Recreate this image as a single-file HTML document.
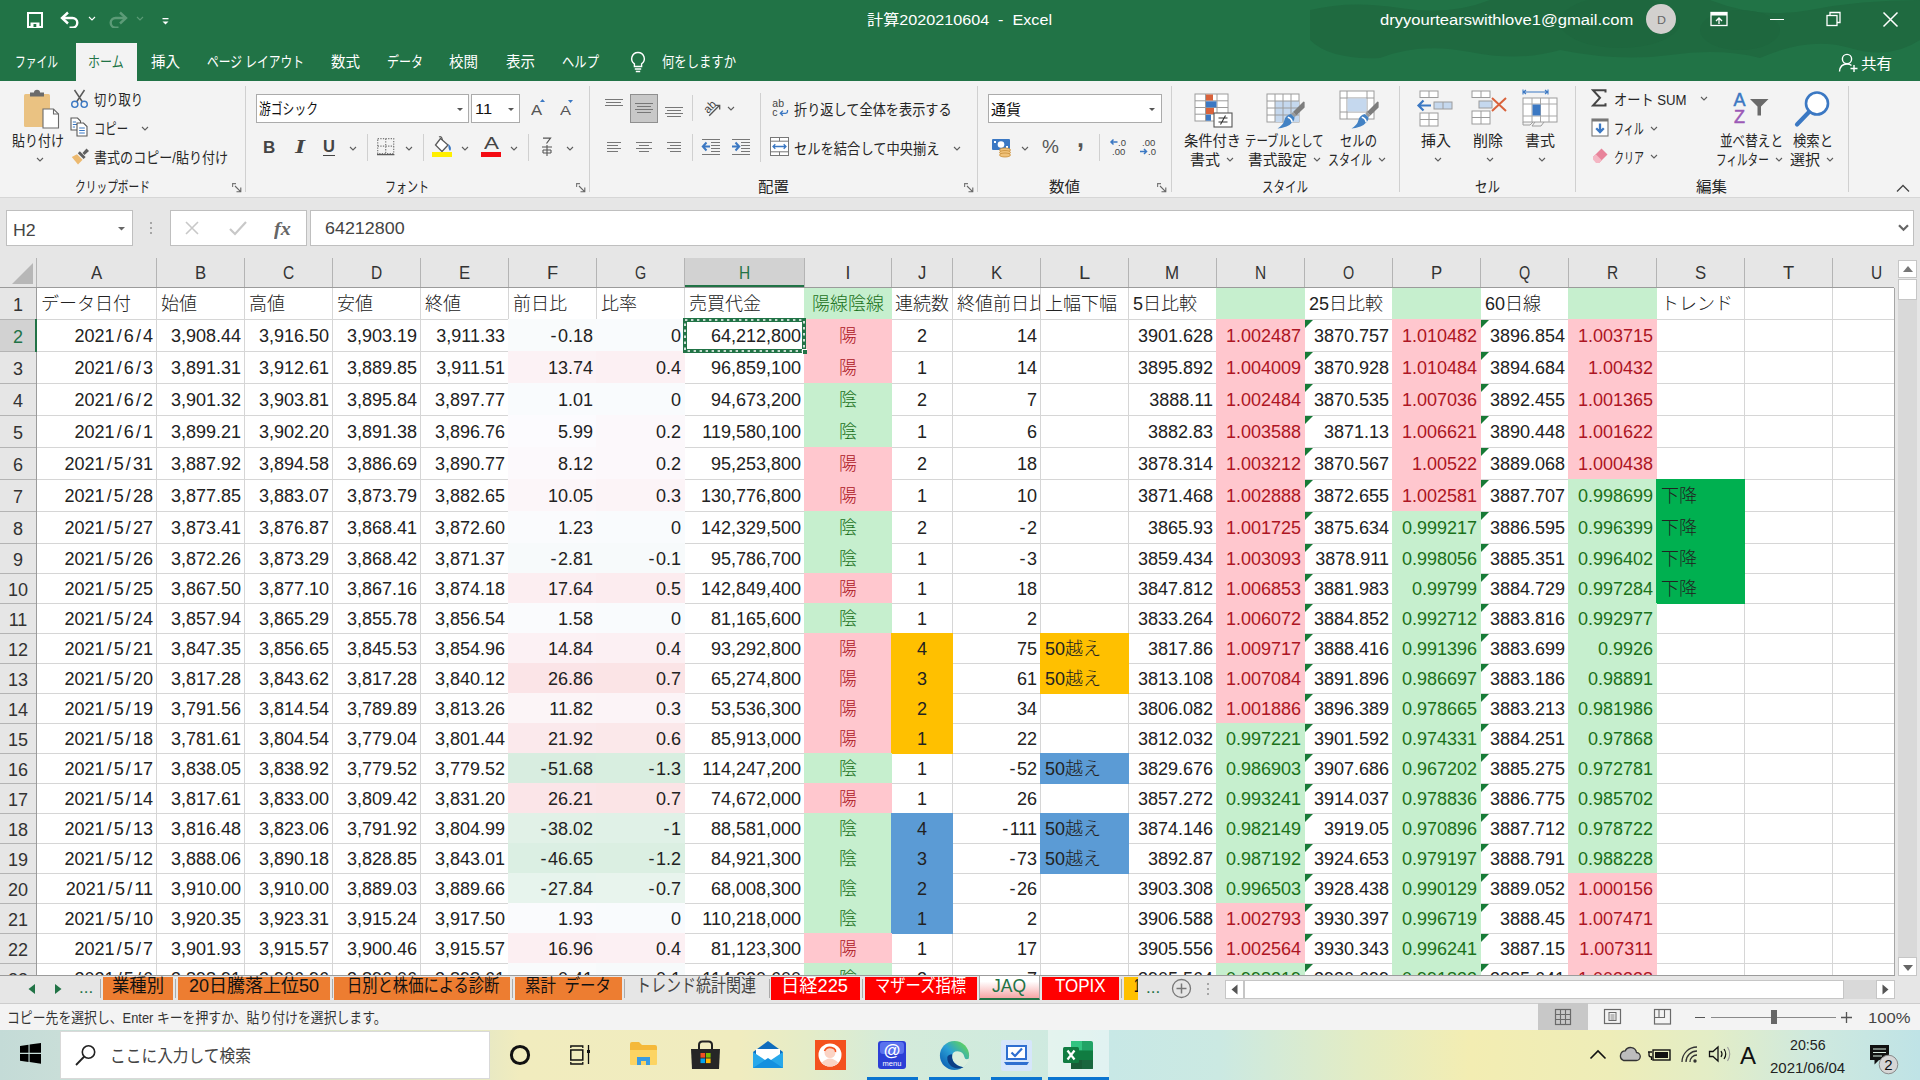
<!DOCTYPE html>
<html lang="ja"><head><meta charset="utf-8"><title>Excel</title>
<style>
html,body{margin:0;padding:0}
body{width:1920px;height:1080px;position:relative;overflow:hidden;background:#fff;
font-family:"Liberation Sans","Noto Sans CJK JP",sans-serif;font-size:15px;color:#262626}
div,svg,span.t,span.c{position:absolute}
span.t{white-space:pre;transform-origin:0 50%;display:block}
.g div{box-sizing:border-box}
.cell{position:absolute;white-space:nowrap;overflow:hidden;font-size:18px;color:#222;box-sizing:border-box;font-weight:300}
.r{text-align:right;padding-right:3px}
.l{text-align:left;padding-left:4px}
.m{text-align:center}
.cell i{font-style:normal;margin:0 2.1px}
.cell b{font-weight:400;margin-right:1.5px}
</style></head>
<body>
<div style="left:0px;top:0px;width:1920px;height:81px;background:#217346;"></div>
<svg style="left:1290px;top:0px;" width="630" height="81" viewBox="0 0 630 81"><g fill="#1f6a40"><path d="M20 10 Q60 0 110 8 T200 0 H420 Q470 20 520 10 T630 0 V40 Q600 60 560 48 T470 58 Q430 48 380 55 T270 50 Q230 62 180 52 T90 58 Q40 60 20 40 Z"/></g><g fill="#1e673e"><ellipse cx="330" cy="22" rx="60" ry="26"/><ellipse cx="450" cy="30" rx="40" ry="20"/></g></svg>
<svg style="left:27px;top:12px;" width="16" height="16" viewBox="0 0 16 16"><rect x="1" y="1" width="14" height="14" fill="none" stroke="#fff" stroke-width="2"/><rect x="3.5" y="10.5" width="9" height="4.5" fill="#fff"/><rect x="6.5" y="12" width="2.8" height="3" fill="#217346"/></svg>
<svg style="left:60px;top:11px;" width="20" height="17" viewBox="0 0 20 17"><path d="M3 7 H12.5 a4.8 4.8 0 0 1 0 9.6 H9.5" fill="none" stroke="#fff" stroke-width="2.4"/><path d="M8 1.5 L2 7 L8 12.5" fill="none" stroke="#fff" stroke-width="2.4"/></svg>
<svg style="left:88px;top:16px;" width="8" height="6" viewBox="0 0 8 6"><path d="M1 1 L4.0 4.0 L7 1" fill="none" stroke="#fff" stroke-width="1.1"/></svg>
<svg style="left:108px;top:11px;" width="20" height="17" viewBox="0 0 20 17"><path d="M17 7 H7.5 a4.8 4.8 0 0 0 0 9.6 H10.5" fill="none" stroke="#5c9b77" stroke-width="2.4"/><path d="M12 1.5 L18 7 L12 12.5" fill="none" stroke="#5c9b77" stroke-width="2.4"/></svg>
<svg style="left:136px;top:16px;" width="8" height="6" viewBox="0 0 8 6"><path d="M1 1 L4.0 4.0 L7 1" fill="none" stroke="#5c9b77" stroke-width="1.1"/></svg>
<svg style="left:161px;top:17px;" width="9" height="9" viewBox="0 0 9 9"><rect x="1.5" y="1" width="6" height="1.3" fill="#fff"/><path d="M1.5 4.5 H7.5 L4.5 7.5 Z" fill="#fff"/></svg>
<span class="t" style="font-size:14.5px;color:#fff;left:867px;top:7.5px;transform:scaleX(1.114);">計算2020210604  -  Excel</span>
<span class="t" style="font-size:15.5px;color:#fff;left:1380px;top:10.5px;transform:scaleX(1.068);">dryyourtearswithlove1@gmail.com</span>
<div style="left:1646px;top:4px;width:30px;height:30px;border-radius:50%;background:#d2d0ce"></div>
<span class="t" style="font-size:11px;color:#666;left:1657px;top:13.5px;transform:scaleX(1.125);">D</span>
<svg style="left:1710px;top:11px;" width="18" height="16" viewBox="0 0 18 16"><rect x="1" y="1.5" width="16" height="13" fill="none" stroke="#fff" stroke-width="1.3"/><rect x="1" y="1.5" width="16" height="3" fill="#fff"/><path d="M9 13 V7.5 M6 10 L9 7 L12 10" fill="none" stroke="#fff" stroke-width="1.3"/></svg>
<div style="left:1770px;top:19px;width:14px;height:1.4px;background:#fff;"></div>
<svg style="left:1826px;top:11px;" width="16" height="16" viewBox="0 0 16 16"><rect x="1" y="4.5" width="10" height="10" fill="none" stroke="#fff" stroke-width="1.3"/><path d="M4 4.5 V1.5 H14 V11.5 H11" fill="none" stroke="#fff" stroke-width="1.3"/></svg>
<svg style="left:1882px;top:11px;" width="17" height="17" viewBox="0 0 17 17"><path d="M1.5 1.5 L15.5 15.5 M15.5 1.5 L1.5 15.5" stroke="#fff" stroke-width="1.5"/></svg>
<div style="left:76px;top:43px;width:61px;height:38px;background:#f3f3f3;"></div>
<span class="t" style="font-size:15px;color:#fff;left:15px;top:49.5px;transform:scaleX(0.717);">ファイル</span>
<span class="t" style="font-size:15px;color:#217346;left:88px;top:49.5px;transform:scaleX(0.800);">ホーム</span>
<span class="t" style="font-size:15px;color:#fff;left:151px;top:49.5px;transform:scaleX(0.967);">挿入</span>
<span class="t" style="font-size:15px;color:#fff;left:207px;top:49.5px;transform:scaleX(0.782);">ページ レイアウト</span>
<span class="t" style="font-size:15px;color:#fff;left:331px;top:49.5px;transform:scaleX(0.967);">数式</span>
<span class="t" style="font-size:15px;color:#fff;left:387px;top:49.5px;transform:scaleX(0.800);">データ</span>
<span class="t" style="font-size:15px;color:#fff;left:449px;top:49.5px;transform:scaleX(0.967);">校閲</span>
<span class="t" style="font-size:15px;color:#fff;left:506px;top:49.5px;transform:scaleX(0.967);">表示</span>
<span class="t" style="font-size:15px;color:#fff;left:562px;top:49.5px;transform:scaleX(0.822);">ヘルプ</span>
<svg style="left:629px;top:51px;" width="18" height="22" viewBox="0 0 18 22"><path d="M9 1.5 a6.2 6.2 0 0 1 3.6 11.3 V15.5 H5.4 V12.8 A6.2 6.2 0 0 1 9 1.5 Z" fill="none" stroke="#fff" stroke-width="1.4"/><path d="M5.8 18 H12.2 M6.8 20.5 H11.2" stroke="#fff" stroke-width="1.3"/></svg>
<span class="t" style="font-size:15px;color:#fff;left:662px;top:49.5px;transform:scaleX(0.822);">何をしますか</span>
<svg style="left:1838px;top:53px;" width="22" height="20" viewBox="0 0 22 20"><circle cx="9" cy="6" r="4.6" fill="none" stroke="#fff" stroke-width="1.4"/><path d="M1.5 18.5 Q2 11 9 11 Q12 11 13.5 12.5" fill="none" stroke="#fff" stroke-width="1.4"/><path d="M16 12 V19 M12.5 15.5 H19.5" stroke="#fff" stroke-width="1.4"/></svg>
<span class="t" style="font-size:15px;color:#fff;left:1861px;top:51.5px;transform:scaleX(1.033);">共有</span>
<div style="left:0px;top:81px;width:1920px;height:116px;background:#f3f3f3;"></div>
<div style="left:0px;top:197px;width:1920px;height:1px;background:#d6d6d6;"></div>
<div style="left:0px;top:198px;width:1920px;height:90px;background:#e6e6e6;"></div>
<div style="left:6px;top:210px;width:127px;height:36px;background:#fff;border:1px solid #bfbfbf;box-sizing:border-box;"></div>
<span class="t" style="font-size:17px;color:#444;left:13px;top:220.5px;transform:scaleX(1.045);">H2</span>
<svg style="left:118px;top:227px;" width="7" height="4" viewBox="0 0 7 4"><path d="M0 0 H7 L3.5 3.5 Z" fill="#666"/></svg>
<div style="left:150px;top:222px;width:2px;height:2px;background:#a6a6a6;"></div>
<div style="left:150px;top:227px;width:2px;height:2px;background:#a6a6a6;"></div>
<div style="left:150px;top:232px;width:2px;height:2px;background:#a6a6a6;"></div>
<div style="left:170px;top:210px;width:137px;height:36px;background:#fff;border:1px solid #bfbfbf;box-sizing:border-box;"></div>
<svg style="left:184px;top:220px;" width="16" height="16" viewBox="0 0 16 16"><path d="M2 2 L14 14 M14 2 L2 14" stroke="#c8c8c8" stroke-width="1.6"/></svg>
<svg style="left:228px;top:220px;" width="20" height="16" viewBox="0 0 20 16"><path d="M2 9 L7 14 L18 2" fill="none" stroke="#c8c8c8" stroke-width="2.2"/></svg>
<span class="t" style="font-size:19px;color:#666;font-weight:700;font-style:italic;font-family:'Liberation Serif',serif;left:274px;top:217.5px;transform:scaleX(1.062);">fx</span>
<div style="left:310px;top:210px;width:1604px;height:36px;background:#fff;border:1px solid #bfbfbf;box-sizing:border-box;"></div>
<span class="t" style="font-size:17px;color:#444;left:325px;top:218.5px;transform:scaleX(1.053);">64212800</span>
<svg style="left:1898px;top:224px;" width="11" height="8" viewBox="0 0 11 8"><path d="M1 1.2 L5.5 5.8 L10 1.2" fill="none" stroke="#666" stroke-width="2.2"/></svg>
<svg style="left:23px;top:89px;" width="37" height="40" viewBox="0 0 37 40"><rect x="1" y="5" width="26" height="33" rx="1.5" fill="#eac282"/><path d="M7 7.5 V3.5 H11 Q11 0.8 14 0.8 Q17 0.8 17 3.5 H21 V7.5 Z" fill="#6b6b6b"/><path d="M20 20 H30.5 L35.5 25 V39 H20 Z" fill="#fff" stroke="#6b6b6b" stroke-width="1.1"/><path d="M30.5 20 V25 H35.5" fill="none" stroke="#6b6b6b" stroke-width="1.1"/></svg>
<span class="t" style="font-size:15px;color:#262626;left:12px;top:128.5px;transform:scaleX(0.867);">貼り付け</span>
<svg style="left:36px;top:157px;" width="8" height="6" viewBox="0 0 8 6"><path d="M1 1 L4.0 4.0 L7 1" fill="none" stroke="#5e5e5e" stroke-width="1.1"/></svg>
<svg style="left:70px;top:89px;" width="19" height="20" viewBox="0 0 19 20"><path d="M4.5 1 L12.5 13 M14.5 1 L6.5 13" stroke="#5a5a5a" stroke-width="1.5"/><circle cx="4.8" cy="15.3" r="3.1" fill="none" stroke="#3b78c3" stroke-width="1.4"/><circle cx="14.2" cy="15.3" r="3.1" fill="none" stroke="#3b78c3" stroke-width="1.4"/></svg>
<span class="t" style="font-size:15px;color:#262626;left:94px;top:87.5px;transform:scaleX(0.817);">切り取り</span>
<svg style="left:70px;top:117px;" width="19" height="20" viewBox="0 0 19 20"><path d="M1 1 H7.5 L10.5 4 V13 H1 Z" fill="#fff" stroke="#5a5a5a" stroke-width="1.1"/><path d="M2.8 5 H6 M2.8 7.5 H8 M2.8 10 H5" stroke="#3b78c3" stroke-width="1"/><path d="M7 6 H13.5 L17 9.5 V19 H7 Z" fill="#fff" stroke="#5a5a5a" stroke-width="1.1"/><path d="M9.2 11 H14.8 M9.2 13.5 H14.8 M9.2 16 H14.8" stroke="#3b78c3" stroke-width="1"/></svg>
<span class="t" style="font-size:15px;color:#262626;left:94px;top:116.5px;transform:scaleX(0.756);">コピー</span>
<svg style="left:141px;top:126px;" width="8" height="6" viewBox="0 0 8 6"><path d="M1 1 L4.0 4.0 L7 1" fill="none" stroke="#5e5e5e" stroke-width="1.1"/></svg>
<svg style="left:71px;top:147px;" width="19" height="19" viewBox="0 0 19 19"><path d="M11.5 6 L15.5 1.5 L18 4 L13.5 8 Z" fill="#5f5f5f"/><path d="M8.8 4.2 L14.6 10 L12.6 12 L6.8 6.2 Z" fill="#5f5f5f"/><path d="M6 7.2 L11.6 12.8 L7 17.5 L0.8 10 Z" fill="#ecb96f"/></svg>
<span class="t" style="font-size:15px;color:#262626;left:94px;top:145.5px;transform:scaleX(0.870);">書式のコピー/貼り付け</span>
<span class="t" style="font-size:15px;color:#262626;left:75px;top:174.5px;transform:scaleX(0.714);">クリップボード</span>
<svg style="left:232px;top:182.5px;" width="10" height="10" viewBox="0 0 10 10"><path d="M0.6 4 V0.6 H4" fill="none" stroke="#777" stroke-width="1.1"/><path d="M3 3 L8.6 8.6 M8.8 4.5 V8.8 H4.5" fill="none" stroke="#666" stroke-width="1.1"/></svg>
<div style="left:245px;top:86px;width:1px;height:106px;background:#d0d0d0;"></div>
<div style="left:256px;top:94px;width:213px;height:29px;background:#fff;border:1px solid #ababab;box-sizing:border-box;"></div>
<span class="t" style="font-size:15px;color:#111;left:259px;top:96.5px;transform:scaleX(0.787);">游ゴシック</span>
<svg style="left:457px;top:108px;" width="6" height="4" viewBox="0 0 6 4"><path d="M0 0 H6 L3.0 3.0 Z" fill="#555"/></svg>
<div style="left:471px;top:94px;width:49px;height:29px;background:#fff;border:1px solid #ababab;box-sizing:border-box;"></div>
<span class="t" style="font-size:15.5px;color:#111;left:475px;top:99.5px;transform:scaleX(1.062);">11</span>
<svg style="left:508px;top:108px;" width="6" height="4" viewBox="0 0 6 4"><path d="M0 0 H6 L3.0 3.0 Z" fill="#555"/></svg>
<span class="t" style="font-size:14.5px;color:#555;left:530.5px;top:101.5px;transform:scaleX(1.150);">A</span>
<svg style="left:540px;top:99px;" width="5" height="3" viewBox="0 0 5 3"><path d="M0 3 L2.5 0 L5 3 Z" fill="#3b78c3"/></svg>
<span class="t" style="font-size:13.5px;color:#555;left:560px;top:102.5px;transform:scaleX(1.222);">A</span>
<svg style="left:568px;top:100px;" width="5" height="3" viewBox="0 0 5 3"><path d="M0 0 L2.5 3 L5 0 Z" fill="#3b78c3"/></svg>
<span class="t" style="font-size:17px;color:#444;font-weight:700;left:263px;top:137.5px;">B</span>
<span class="t" style="font-size:18px;color:#444;font-weight:700;font-style:italic;font-family:'Liberation Serif',serif;left:295px;top:137.0px;transform:scaleX(1.429);">I</span>
<span class="t" style="font-size:16.5px;color:#444;font-weight:700;left:323px;top:137.0px;">U</span>
<div style="left:323px;top:155px;width:12px;height:1.3px;background:#444;"></div>
<svg style="left:349px;top:146px;" width="8" height="6" viewBox="0 0 8 6"><path d="M1 1 L4.0 4.0 L7 1" fill="none" stroke="#5e5e5e" stroke-width="1.1"/></svg>
<div style="left:367px;top:134px;width:1px;height:27px;background:#d0d0d0;"></div>
<svg style="left:377px;top:138px;" width="18" height="18" viewBox="0 0 18 18"><rect x="0.7" y="0.7" width="16" height="15" fill="none" stroke="#7a7a7a" stroke-width="1.2" stroke-dasharray="1.3 1.3"/><path d="M8.7 0.7 V16 M0.7 8.2 H16.7" stroke="#7a7a7a" stroke-width="1.2" stroke-dasharray="1.3 1.3"/><path d="M0 16.6 H17.4" stroke="#5a5a5a" stroke-width="1.3"/></svg>
<svg style="left:405px;top:146px;" width="8" height="6" viewBox="0 0 8 6"><path d="M1 1 L4.0 4.0 L7 1" fill="none" stroke="#5e5e5e" stroke-width="1.1"/></svg>
<div style="left:423px;top:134px;width:1px;height:27px;background:#d0d0d0;"></div>
<svg style="left:434px;top:136px;" width="19" height="17" viewBox="0 0 19 17"><path d="M6.5 2.5 L14 9 L8 15.5 L1.5 9 Z" fill="#fff" stroke="#5a5a5a" stroke-width="1.3"/><path d="M5 1 Q7.5 -0.5 8.5 4" fill="none" stroke="#5a5a5a" stroke-width="1.1"/><path d="M14.5 8 Q18.5 12 16 15 Q14 13 14.5 8 Z" fill="#3b78c3"/></svg>
<div style="left:432px;top:152px;width:20px;height:5px;background:#ffef00;"></div>
<svg style="left:461px;top:146px;" width="8" height="6" viewBox="0 0 8 6"><path d="M1 1 L4.0 4.0 L7 1" fill="none" stroke="#5e5e5e" stroke-width="1.1"/></svg>
<span class="t" style="font-size:17px;color:#444;left:484px;top:134.0px;transform:scaleX(1.318);">A</span>
<div style="left:481px;top:152px;width:20px;height:5px;background:#f40b12;"></div>
<svg style="left:510px;top:146px;" width="8" height="6" viewBox="0 0 8 6"><path d="M1 1 L4.0 4.0 L7 1" fill="none" stroke="#5e5e5e" stroke-width="1.1"/></svg>
<div style="left:528px;top:134px;width:1px;height:27px;background:#d0d0d0;"></div>
<svg style="left:540px;top:137px;" width="14" height="20" viewBox="0 0 14 20"><path d="M3 1.2 H10.5 L6.5 6.5" fill="none" stroke="#555" stroke-width="1.2"/><path d="M2 10 H12 M3 13 H11 M3 16 H11 M7 8 V19 M3 13 V16 M11 13 V16" fill="none" stroke="#555" stroke-width="1.1"/></svg>
<svg style="left:566px;top:146px;" width="8" height="6" viewBox="0 0 8 6"><path d="M1 1 L4.0 4.0 L7 1" fill="none" stroke="#5e5e5e" stroke-width="1.1"/></svg>
<span class="t" style="font-size:15px;color:#262626;left:385px;top:174.5px;transform:scaleX(0.733);">フォント</span>
<svg style="left:576px;top:182.5px;" width="10" height="10" viewBox="0 0 10 10"><path d="M0.6 4 V0.6 H4" fill="none" stroke="#777" stroke-width="1.1"/><path d="M3 3 L8.6 8.6 M8.8 4.5 V8.8 H4.5" fill="none" stroke="#666" stroke-width="1.1"/></svg>
<div style="left:589px;top:86px;width:1px;height:106px;background:#d0d0d0;"></div>
<div style="left:605px;top:99px;width:18px;height:1.1px;background:#777;"></div>
<div style="left:606px;top:102px;width:15px;height:1.1px;background:#777;"></div>
<div style="left:605px;top:105px;width:18px;height:1.1px;background:#777;"></div>
<div style="left:630px;top:94px;width:28px;height:29px;background:#c8c8c8;border:1px solid #8f8f8f;box-sizing:border-box;"></div>
<div style="left:635px;top:103px;width:18px;height:1.1px;background:#777;"></div>
<div style="left:637px;top:106px;width:14px;height:1.1px;background:#777;"></div>
<div style="left:635px;top:109px;width:18px;height:1.1px;background:#777;"></div>
<div style="left:637px;top:112px;width:14px;height:1.1px;background:#777;"></div>
<div style="left:665px;top:107px;width:18px;height:1.1px;background:#777;"></div>
<div style="left:667px;top:110px;width:14px;height:1.1px;background:#777;"></div>
<div style="left:665px;top:113px;width:18px;height:1.1px;background:#777;"></div>
<div style="left:667px;top:116px;width:14px;height:1.1px;background:#777;"></div>
<div style="left:692px;top:95px;width:1px;height:26px;background:#d0d0d0;"></div>
<svg style="left:701px;top:98px;" width="20" height="20" viewBox="0 0 20 20"><text x="8.8" y="12.6" text-anchor="middle" font-size="11.5" fill="#444" font-family="Liberation Sans,sans-serif" transform="rotate(-45 8.8 8.9)">ab</text><path d="M8.2 17.8 L18.6 7.2 M14.4 7.3 H18.7 V11.6" fill="none" stroke="#555" stroke-width="1.3"/></svg>
<svg style="left:727px;top:106px;" width="8" height="6" viewBox="0 0 8 6"><path d="M1 1 L4.0 4.0 L7 1" fill="none" stroke="#5e5e5e" stroke-width="1.1"/></svg>
<div style="left:760px;top:93px;width:1px;height:69px;background:#d0d0d0;"></div>
<svg style="left:772px;top:98px;" width="18" height="19" viewBox="0 0 18 19"><text x="0.3" y="9" font-size="10.5" fill="#444" font-family="Liberation Sans,sans-serif">ab</text><text x="0.3" y="17.8" font-size="10.5" fill="#444" font-family="Liberation Sans,sans-serif">c</text><path d="M15.5 12 V13.5 Q15.5 15.3 13.7 15.3 H8.5 M10.8 12.8 L8.3 15.3 L10.8 17.8" fill="none" stroke="#3b78c3" stroke-width="1.3"/></svg>
<span class="t" style="font-size:15px;color:#262626;left:794px;top:97.5px;transform:scaleX(0.878);">折り返して全体を表示する</span>
<div style="left:607px;top:142px;width:14px;height:1.1px;background:#777;"></div>
<div style="left:607px;top:145px;width:11px;height:1.1px;background:#777;"></div>
<div style="left:607px;top:148px;width:14px;height:1.1px;background:#777;"></div>
<div style="left:607px;top:151px;width:11px;height:1.1px;background:#777;"></div>
<div style="left:636px;top:142px;width:16px;height:1.1px;background:#777;"></div>
<div style="left:639px;top:145px;width:10px;height:1.1px;background:#777;"></div>
<div style="left:636px;top:148px;width:16px;height:1.1px;background:#777;"></div>
<div style="left:639px;top:151px;width:10px;height:1.1px;background:#777;"></div>
<div style="left:667px;top:142px;width:14px;height:1.1px;background:#777;"></div>
<div style="left:670px;top:145px;width:11px;height:1.1px;background:#777;"></div>
<div style="left:667px;top:148px;width:14px;height:1.1px;background:#777;"></div>
<div style="left:670px;top:151px;width:11px;height:1.1px;background:#777;"></div>
<div style="left:692px;top:134px;width:1px;height:27px;background:#d0d0d0;"></div>
<div style="left:702px;top:139px;width:18px;height:1.1px;background:#777;"></div>
<div style="left:711px;top:142px;width:9px;height:1.1px;background:#777;"></div>
<div style="left:711px;top:145px;width:9px;height:1.1px;background:#777;"></div>
<div style="left:711px;top:148px;width:9px;height:1.1px;background:#777;"></div>
<div style="left:711px;top:151px;width:9px;height:1.1px;background:#777;"></div>
<div style="left:702px;top:154px;width:18px;height:1.1px;background:#777;"></div>
<svg style="left:701px;top:141px;" width="10" height="11" viewBox="0 0 10 11"><path d="M9 5.5 H2.2 M5.5 1.5 L1.8 5.5 L5.5 9.5" fill="none" stroke="#3b78c3" stroke-width="2"/></svg>
<div style="left:732px;top:139px;width:18px;height:1.1px;background:#777;"></div>
<div style="left:741px;top:142px;width:9px;height:1.1px;background:#777;"></div>
<div style="left:741px;top:145px;width:9px;height:1.1px;background:#777;"></div>
<div style="left:741px;top:148px;width:9px;height:1.1px;background:#777;"></div>
<div style="left:741px;top:151px;width:9px;height:1.1px;background:#777;"></div>
<div style="left:732px;top:154px;width:18px;height:1.1px;background:#777;"></div>
<svg style="left:731px;top:141px;" width="10" height="11" viewBox="0 0 10 11"><path d="M1 5.5 H7.8 M4.5 1.5 L8.2 5.5 L4.5 9.5" fill="none" stroke="#3b78c3" stroke-width="2"/></svg>
<svg style="left:769px;top:136px;" width="21" height="21" viewBox="0 0 21 21"><rect x="1.5" y="1.5" width="18" height="18" fill="#fff" stroke="#777" stroke-width="1"/><path d="M1.5 5.2 H19.5 M1.5 15.8 H19.5 M10.5 1.5 V5.2 M10.5 15.8 V19.5" stroke="#777" stroke-width="1"/><path d="M4 10.5 H17 M6.3 8.2 L4 10.5 L6.3 12.8 M14.7 8.2 L17 10.5 L14.7 12.8" fill="none" stroke="#3b78c3" stroke-width="1.3"/></svg>
<span class="t" style="font-size:15px;color:#262626;left:794px;top:136.5px;transform:scaleX(0.885);">セルを結合して中央揃え</span>
<svg style="left:953px;top:146px;" width="8" height="6" viewBox="0 0 8 6"><path d="M1 1 L4.0 4.0 L7 1" fill="none" stroke="#5e5e5e" stroke-width="1.1"/></svg>
<span class="t" style="font-size:15px;color:#262626;left:758px;top:174.5px;transform:scaleX(1.033);">配置</span>
<svg style="left:964px;top:182.5px;" width="10" height="10" viewBox="0 0 10 10"><path d="M0.6 4 V0.6 H4" fill="none" stroke="#777" stroke-width="1.1"/><path d="M3 3 L8.6 8.6 M8.8 4.5 V8.8 H4.5" fill="none" stroke="#666" stroke-width="1.1"/></svg>
<div style="left:977px;top:86px;width:1px;height:106px;background:#d0d0d0;"></div>
<div style="left:988px;top:94px;width:174px;height:29px;background:#fff;border:1px solid #ababab;box-sizing:border-box;"></div>
<span class="t" style="font-size:15px;color:#111;left:991px;top:97.5px;">通貨</span>
<svg style="left:1149px;top:108px;" width="6" height="4" viewBox="0 0 6 4"><path d="M0 0 H6 L3.0 3.0 Z" fill="#555"/></svg>
<svg style="left:991px;top:138px;" width="22" height="20" viewBox="0 0 22 20"><rect x="1" y="1" width="18" height="11" rx="1" fill="#3b78c3"/><circle cx="10" cy="6.5" r="3.3" fill="#fff"/><rect x="3" y="3" width="2" height="2" fill="#fff"/><rect x="15" y="8" width="2" height="2" fill="#fff"/><ellipse cx="14" cy="12" rx="5.5" ry="2" fill="#f0c27a" stroke="#c98f3a" stroke-width=".8"/><ellipse cx="14" cy="14.5" rx="5.5" ry="2" fill="#f0c27a" stroke="#c98f3a" stroke-width=".8"/><ellipse cx="14" cy="17" rx="5.5" ry="2" fill="#f0c27a" stroke="#c98f3a" stroke-width=".8"/></svg>
<svg style="left:1021px;top:146px;" width="8" height="6" viewBox="0 0 8 6"><path d="M1 1 L4.0 4.0 L7 1" fill="none" stroke="#5e5e5e" stroke-width="1.1"/></svg>
<span class="t" style="font-size:19px;color:#555;left:1042px;top:136.0px;">%</span>
<span class="t" style="font-size:25px;color:#555;font-weight:700;left:1077px;top:124.0px;">,</span>
<div style="left:1099px;top:134px;width:1px;height:27px;background:#d0d0d0;"></div>
<svg style="left:1109px;top:138px;" width="19" height="19" viewBox="0 0 19 19"><path d="M8.5 4 H2 M4.5 1.5 L2 4 L4.5 6.5" fill="none" stroke="#3b78c3" stroke-width="1.5"/><text x="9" y="8" font-size="9.5" fill="#444" font-family="Liberation Sans,sans-serif">.0</text><text x="3" y="17" font-size="9.5" fill="#444" font-family="Liberation Sans,sans-serif">.00</text></svg>
<svg style="left:1138px;top:138px;" width="19" height="19" viewBox="0 0 19 19"><text x="4" y="8" font-size="9.5" fill="#444" font-family="Liberation Sans,sans-serif">.00</text><path d="M2 13.5 H8.5 M6 11 L8.5 13.5 L6 16" fill="none" stroke="#3b78c3" stroke-width="1.5"/><text x="10" y="17" font-size="9.5" fill="#444" font-family="Liberation Sans,sans-serif">.0</text></svg>
<span class="t" style="font-size:15px;color:#262626;left:1049px;top:174.5px;transform:scaleX(1.033);">数値</span>
<svg style="left:1157px;top:182.5px;" width="10" height="10" viewBox="0 0 10 10"><path d="M0.6 4 V0.6 H4" fill="none" stroke="#777" stroke-width="1.1"/><path d="M3 3 L8.6 8.6 M8.8 4.5 V8.8 H4.5" fill="none" stroke="#666" stroke-width="1.1"/></svg>
<div style="left:1171px;top:86px;width:1px;height:106px;background:#d0d0d0;"></div>
<svg style="left:1194px;top:93px;" width="39" height="36" viewBox="0 0 39 36"><rect x="1" y="1" width="33" height="27" fill="#fff" stroke="#9c9c9c" stroke-width="1"/><path d="M1 7.8 H34 M1 14.5 H34 M1 21.2 H34 M11.5 1 V28 M23 1 V28" stroke="#9c9c9c" stroke-width="1"/><rect x="12" y="1.5" width="7" height="6" fill="#d9623b"/><rect x="12" y="8.3" width="10.5" height="6" fill="#3b78c3"/><rect x="12" y="15" width="8" height="6" fill="#d9623b"/><rect x="12" y="21.7" width="5" height="6" fill="#3b78c3"/><rect x="20" y="20" width="18" height="14" fill="#fff" stroke="#555" stroke-width="1.1"/><path d="M24.5 25 H33.5 M24.5 29 H33.5 M31.5 22.5 L26.5 31.5" stroke="#333" stroke-width="1.1"/></svg>
<span class="t" style="font-size:15px;color:#262626;left:1184px;top:128.5px;transform:scaleX(0.950);">条件付き</span>
<span class="t" style="font-size:15px;color:#262626;left:1190px;top:147.5px;">書式</span>
<svg style="left:1226px;top:157px;" width="8" height="6" viewBox="0 0 8 6"><path d="M1 1 L4.0 4.0 L7 1" fill="none" stroke="#5e5e5e" stroke-width="1.1"/></svg>
<svg style="left:1266px;top:93px;" width="34" height="30" viewBox="0 0 34 30"><rect x="1" y="1" width="32" height="28" fill="#fff" stroke="#9c9c9c" stroke-width="1"/><rect x="9" y="8" width="24" height="21" fill="#c5d8ee"/><path d="M1 8 H33 M1 15 H33 M1 22 H33 M9 1 V29 M17 1 V29 M25 1 V29" stroke="#9c9c9c" stroke-width="1"/></svg>
<svg style="left:1277px;top:101px;" width="28" height="28" viewBox="0 0 28 28"><path d="M16 11 L26.5 0.5 L27.6 1 L27.6 6.5 L19.3 14.5 Z" fill="#7d7d7d"/><path d="M14.3 12.7 L16 11 L19.3 14.5 L17.6 16.2 Z" fill="#9a9a9a"/><path d="M14 13 L17.6 16.6 Q17.5 22 9.5 25.5 Q4 27.6 0.5 27.6 Q6.5 23.5 7.3 19.5 Q8.5 14.2 14 13 Z" fill="#4382c4"/><path d="M10.8 16.3 Q14.6 17.3 15.2 21.3" fill="none" stroke="#fff" stroke-width="1.6"/></svg>
<span class="t" style="font-size:15px;color:#262626;left:1245px;top:128.5px;transform:scaleX(0.760);">テーブルとして</span>
<span class="t" style="font-size:15px;color:#262626;left:1248px;top:147.5px;transform:scaleX(0.983);">書式設定</span>
<svg style="left:1313px;top:157px;" width="8" height="6" viewBox="0 0 8 6"><path d="M1 1 L4.0 4.0 L7 1" fill="none" stroke="#5e5e5e" stroke-width="1.1"/></svg>
<svg style="left:1339px;top:90px;" width="36" height="32" viewBox="0 0 36 32"><rect x="1" y="1" width="34" height="28" fill="#fff" stroke="#9c9c9c" stroke-width="1"/><path d="M1 8 H35 M1 22 H35 M8 1 V29 M28 1 V29" stroke="#9c9c9c" stroke-width="1"/><rect x="8.5" y="8.5" width="19" height="13" fill="#c5d8ee"/></svg>
<svg style="left:1350.5px;top:101px;" width="28" height="28" viewBox="0 0 28 28"><path d="M16 11 L26.5 0.5 L27.6 1 L27.6 6.5 L19.3 14.5 Z" fill="#7d7d7d"/><path d="M14.3 12.7 L16 11 L19.3 14.5 L17.6 16.2 Z" fill="#9a9a9a"/><path d="M14 13 L17.6 16.6 Q17.5 22 9.5 25.5 Q4 27.6 0.5 27.6 Q6.5 23.5 7.3 19.5 Q8.5 14.2 14 13 Z" fill="#4382c4"/><path d="M10.8 16.3 Q14.6 17.3 15.2 21.3" fill="none" stroke="#fff" stroke-width="1.6"/></svg>
<span class="t" style="font-size:15px;color:#262626;left:1340px;top:128.5px;transform:scaleX(0.822);">セルの</span>
<span class="t" style="font-size:15px;color:#262626;left:1328px;top:147.5px;transform:scaleX(0.733);">スタイル</span>
<svg style="left:1378px;top:157px;" width="8" height="6" viewBox="0 0 8 6"><path d="M1 1 L4.0 4.0 L7 1" fill="none" stroke="#5e5e5e" stroke-width="1.1"/></svg>
<span class="t" style="font-size:15px;color:#262626;left:1262px;top:174.5px;transform:scaleX(0.767);">スタイル</span>
<div style="left:1399px;top:86px;width:1px;height:106px;background:#d0d0d0;"></div>
<svg style="left:1416px;top:90px;" width="38" height="37" viewBox="0 0 38 37"><rect x="4" y="1" width="18" height="6.5" fill="#fff" stroke="#9c9c9c" stroke-width="1"/><path d="M13 1 V7.5" stroke="#9c9c9c"/><rect x="18" y="12" width="18" height="7" fill="#c5d8ee" stroke="#9c9c9c" stroke-width="1"/><path d="M27 12 V19" stroke="#9c9c9c"/><rect x="4" y="23" width="18" height="13" fill="#fff" stroke="#9c9c9c" stroke-width="1"/><path d="M13 23 V36 M4 29.5 H22" stroke="#9c9c9c"/><path d="M15 15.5 H3 M7.5 10.5 L2.5 15.5 L7.5 20.5" fill="none" stroke="#3b78c3" stroke-width="2.2"/></svg>
<span class="t" style="font-size:15px;color:#262626;left:1421px;top:128.5px;">挿入</span>
<svg style="left:1434px;top:157px;" width="8" height="6" viewBox="0 0 8 6"><path d="M1 1 L4.0 4.0 L7 1" fill="none" stroke="#5e5e5e" stroke-width="1.1"/></svg>
<svg style="left:1471px;top:90px;" width="38" height="37" viewBox="0 0 38 37"><rect x="1" y="1" width="18" height="6.5" fill="#fff" stroke="#9c9c9c" stroke-width="1"/><path d="M10 1 V7.5" stroke="#9c9c9c"/><rect x="8" y="11" width="13" height="7" fill="#c5d8ee" stroke="#9c9c9c" stroke-width="1"/><rect x="1" y="21" width="18" height="13" fill="#fff" stroke="#9c9c9c" stroke-width="1"/><path d="M10 21 V34 M1 27.5 H19" stroke="#9c9c9c"/><path d="M21 8 L35 21 M35 8 L21 21" stroke="#d9623b" stroke-width="2"/></svg>
<span class="t" style="font-size:15px;color:#262626;left:1473px;top:128.5px;">削除</span>
<svg style="left:1486px;top:157px;" width="8" height="6" viewBox="0 0 8 6"><path d="M1 1 L4.0 4.0 L7 1" fill="none" stroke="#5e5e5e" stroke-width="1.1"/></svg>
<svg style="left:1522px;top:89px;" width="36" height="38" viewBox="0 0 36 38"><path d="M1 3 H26 M1 0.5 V5.5 M26 0.5 V5.5 M4 1 L1.5 3 L4 5 M23 1 L25.5 3 L23 5" fill="none" stroke="#3b78c3" stroke-width="1.1"/><rect x="1" y="9" width="34" height="24" fill="#fff" stroke="#9c9c9c" stroke-width="1"/><path d="M1 15 H35 M1 27 H35 M10 9 V33 M18.5 9 V33 M27 9 V33" stroke="#a8a8a8" stroke-width="1"/><rect x="10.5" y="15.5" width="8" height="11" fill="#3b78c3"/><path d="M1 33 V36 H8 L11 33 M13 33 L10 37 H19 L22 33" fill="none" stroke="#9c9c9c" stroke-width="1"/></svg>
<span class="t" style="font-size:15px;color:#262626;left:1525px;top:128.5px;">書式</span>
<svg style="left:1538px;top:157px;" width="8" height="6" viewBox="0 0 8 6"><path d="M1 1 L4.0 4.0 L7 1" fill="none" stroke="#5e5e5e" stroke-width="1.1"/></svg>
<span class="t" style="font-size:15px;color:#262626;left:1475px;top:174.5px;transform:scaleX(0.833);">セル</span>
<div style="left:1575px;top:86px;width:1px;height:106px;background:#d0d0d0;"></div>
<svg style="left:1591px;top:89px;" width="16" height="18" viewBox="0 0 16 18"><path d="M14.5 3.5 V1.2 H2 L9 8.8 L2 16.5 H14.5 V14.2" fill="none" stroke="#444" stroke-width="2"/></svg>
<span class="t" style="font-size:15px;color:#262626;left:1614px;top:87.5px;transform:scaleX(0.880);">オート SUM</span>
<svg style="left:1700px;top:96px;" width="8" height="6" viewBox="0 0 8 6"><path d="M1 1 L4.0 4.0 L7 1" fill="none" stroke="#5e5e5e" stroke-width="1.1"/></svg>
<svg style="left:1591px;top:118px;" width="18" height="19" viewBox="0 0 18 19"><rect x="1" y="1" width="16" height="17" fill="#fff" stroke="#777" stroke-width="1.1"/><rect x="1" y="1" width="16" height="2.5" fill="#777"/><path d="M9 5.5 V14 M5.2 10.2 L9 14 L12.8 10.2" fill="none" stroke="#3b78c3" stroke-width="2.3"/></svg>
<span class="t" style="font-size:15px;color:#262626;left:1614px;top:116.5px;transform:scaleX(0.667);">フィル</span>
<svg style="left:1650px;top:126px;" width="8" height="6" viewBox="0 0 8 6"><path d="M1 1 L4.0 4.0 L7 1" fill="none" stroke="#5e5e5e" stroke-width="1.1"/></svg>
<svg style="left:1591px;top:147px;" width="18" height="18" viewBox="0 0 18 18"><path d="M10.5 1.5 L16.5 7.5 L8 16 L2 10 Z" fill="#e8839a"/><path d="M4.8 7.2 L10.8 13.2 L8 16 H5 L2 12.5 V10 Z" fill="#f4b6c3"/></svg>
<span class="t" style="font-size:15px;color:#262626;left:1614px;top:145.5px;transform:scaleX(0.667);">クリア</span>
<svg style="left:1650px;top:154px;" width="8" height="6" viewBox="0 0 8 6"><path d="M1 1 L4.0 4.0 L7 1" fill="none" stroke="#5e5e5e" stroke-width="1.1"/></svg>
<svg style="left:1733px;top:91px;" width="37" height="34" viewBox="0 0 37 34"><text x="0.5" y="14.5" font-size="18" fill="#3b78c3" stroke="#3b78c3" stroke-width=".5" font-family="Liberation Sans,sans-serif">A</text><text x="1" y="31.5" font-size="18" fill="#9b59b6" stroke="#9b59b6" stroke-width=".5" font-family="Liberation Sans,sans-serif">Z</text><path d="M17 8 H35.5 L28 15.5 V24.5 H24.5 V15.5 Z" fill="#6a6a6a"/></svg>
<span class="t" style="font-size:15px;color:#262626;left:1720px;top:128.5px;transform:scaleX(0.840);">並べ替えと</span>
<span class="t" style="font-size:15px;color:#262626;left:1716px;top:147.5px;transform:scaleX(0.707);">フィルター</span>
<svg style="left:1775px;top:157px;" width="8" height="6" viewBox="0 0 8 6"><path d="M1 1 L4.0 4.0 L7 1" fill="none" stroke="#5e5e5e" stroke-width="1.1"/></svg>
<svg style="left:1794px;top:90px;" width="38" height="38" viewBox="0 0 38 38"><circle cx="23" cy="13.5" r="11" fill="#fff" stroke="#3b78c3" stroke-width="2.6"/><path d="M15 22 L3 34.5" stroke="#3b78c3" stroke-width="4.2" stroke-linecap="round"/></svg>
<span class="t" style="font-size:15px;color:#262626;left:1793px;top:128.5px;transform:scaleX(0.889);">検索と</span>
<span class="t" style="font-size:15px;color:#262626;left:1790px;top:147.5px;">選択</span>
<svg style="left:1826px;top:157px;" width="8" height="6" viewBox="0 0 8 6"><path d="M1 1 L4.0 4.0 L7 1" fill="none" stroke="#5e5e5e" stroke-width="1.1"/></svg>
<span class="t" style="font-size:15px;color:#262626;left:1696px;top:174.5px;transform:scaleX(1.033);">編集</span>
<div style="left:1848px;top:86px;width:1px;height:106px;background:#d0d0d0;"></div>
<svg style="left:1896px;top:184px;" width="14" height="9" viewBox="0 0 14 9"><path d="M1 7.5 L7 1.5 L13 7.5" fill="none" stroke="#444" stroke-width="1.3"/></svg>
<div style="left:684px;top:258px;width:120px;height:29px;background:#d2d2d2;"></div>
<div style="left:684px;top:285px;width:121px;height:2px;background:#217346;"></div>
<div style="left:0px;top:287px;width:1894px;height:1px;background:#9b9b9b;"></div>
<svg style="left:11px;top:262px;" width="23" height="23" viewBox="0 0 23 23"><path d="M22 1 V22 H1 Z" fill="#b7b7b7"/></svg>
<div style="left:36px;top:258px;width:1px;height:29px;background:#b4b4b4;"></div>
<div style="left:156px;top:258px;width:1px;height:29px;background:#b4b4b4;"></div>
<div style="left:244px;top:258px;width:1px;height:29px;background:#b4b4b4;"></div>
<div style="left:332px;top:258px;width:1px;height:29px;background:#b4b4b4;"></div>
<div style="left:420px;top:258px;width:1px;height:29px;background:#b4b4b4;"></div>
<div style="left:508px;top:258px;width:1px;height:29px;background:#b4b4b4;"></div>
<div style="left:596px;top:258px;width:1px;height:29px;background:#b4b4b4;"></div>
<div style="left:684px;top:258px;width:1px;height:29px;background:#b4b4b4;"></div>
<div style="left:804px;top:258px;width:1px;height:29px;background:#b4b4b4;"></div>
<div style="left:891px;top:258px;width:1px;height:29px;background:#b4b4b4;"></div>
<div style="left:952px;top:258px;width:1px;height:29px;background:#b4b4b4;"></div>
<div style="left:1040px;top:258px;width:1px;height:29px;background:#b4b4b4;"></div>
<div style="left:1128px;top:258px;width:1px;height:29px;background:#b4b4b4;"></div>
<div style="left:1216px;top:258px;width:1px;height:29px;background:#b4b4b4;"></div>
<div style="left:1304px;top:258px;width:1px;height:29px;background:#b4b4b4;"></div>
<div style="left:1392px;top:258px;width:1px;height:29px;background:#b4b4b4;"></div>
<div style="left:1480px;top:258px;width:1px;height:29px;background:#b4b4b4;"></div>
<div style="left:1568px;top:258px;width:1px;height:29px;background:#b4b4b4;"></div>
<div style="left:1656px;top:258px;width:1px;height:29px;background:#b4b4b4;"></div>
<div style="left:1744px;top:258px;width:1px;height:29px;background:#b4b4b4;"></div>
<div style="left:1832px;top:258px;width:1px;height:29px;background:#b4b4b4;"></div>
<span class="t" style="font-size:17.5px;color:#333;left:90.75px;top:262.5px;transform:scaleX(0.958);">A</span>
<span class="t" style="font-size:17.5px;color:#333;left:194.75px;top:262.5px;transform:scaleX(0.958);">B</span>
<span class="t" style="font-size:17.5px;color:#333;left:282.75px;top:262.5px;transform:scaleX(0.885);">C</span>
<span class="t" style="font-size:17.5px;color:#333;left:370.75px;top:262.5px;transform:scaleX(0.885);">D</span>
<span class="t" style="font-size:17.5px;color:#333;left:458.75px;top:262.5px;transform:scaleX(0.958);">E</span>
<span class="t" style="font-size:17.5px;color:#333;left:546.75px;top:262.5px;transform:scaleX(1.045);">F</span>
<span class="t" style="font-size:17.5px;color:#333;left:634.75px;top:262.5px;transform:scaleX(0.821);">G</span>
<span class="t" style="font-size:17.5px;color:#217346;left:738.75px;top:262.5px;transform:scaleX(0.885);">H</span>
<span class="t" style="font-size:17.5px;color:#333;left:845.5px;top:262.5px;">I</span>
<span class="t" style="font-size:17.5px;color:#333;left:917.75px;top:262.5px;transform:scaleX(0.944);">J</span>
<span class="t" style="font-size:17.5px;color:#333;left:990.75px;top:262.5px;transform:scaleX(0.958);">K</span>
<span class="t" style="font-size:17.5px;color:#333;left:1078.75px;top:262.5px;transform:scaleX(1.150);">L</span>
<span class="t" style="font-size:17.5px;color:#333;left:1165.25px;top:262.5px;transform:scaleX(0.967);">M</span>
<span class="t" style="font-size:17.5px;color:#333;left:1254.75px;top:262.5px;transform:scaleX(0.885);">N</span>
<span class="t" style="font-size:17.5px;color:#333;left:1342.75px;top:262.5px;transform:scaleX(0.821);">O</span>
<span class="t" style="font-size:17.5px;color:#333;left:1430.75px;top:262.5px;transform:scaleX(0.958);">P</span>
<span class="t" style="font-size:17.5px;color:#333;left:1518.75px;top:262.5px;transform:scaleX(0.821);">Q</span>
<span class="t" style="font-size:17.5px;color:#333;left:1606.75px;top:262.5px;transform:scaleX(0.885);">R</span>
<span class="t" style="font-size:17.5px;color:#333;left:1694.75px;top:262.5px;transform:scaleX(0.958);">S</span>
<span class="t" style="font-size:17.5px;color:#333;left:1782.75px;top:262.5px;transform:scaleX(1.045);">T</span>
<span class="t" style="font-size:17.5px;color:#333;left:1870.75px;top:262.5px;transform:scaleX(0.885);">U</span>
<div class="g" style="left:0;top:288px;width:1894px;height:687px;overflow:hidden;background:#fff">
<div style="left:0;top:0;width:36px;height:687px;background:#e6e6e6"></div>
<div style="left:36px;top:0;width:1px;height:687px;background:#9b9b9b"></div>
<div style="left:37px;top:31px;width:1857px;height:1px;background:#d6d6d6"></div>
<div style="left:0;top:31px;width:36px;height:1px;background:#b4b4b4"></div>
<div style="left:37px;top:63px;width:1857px;height:1px;background:#d6d6d6"></div>
<div style="left:0;top:63px;width:36px;height:1px;background:#b4b4b4"></div>
<div style="left:37px;top:95px;width:1857px;height:1px;background:#d6d6d6"></div>
<div style="left:0;top:95px;width:36px;height:1px;background:#b4b4b4"></div>
<div style="left:37px;top:127px;width:1857px;height:1px;background:#d6d6d6"></div>
<div style="left:0;top:127px;width:36px;height:1px;background:#b4b4b4"></div>
<div style="left:37px;top:159px;width:1857px;height:1px;background:#d6d6d6"></div>
<div style="left:0;top:159px;width:36px;height:1px;background:#b4b4b4"></div>
<div style="left:37px;top:191px;width:1857px;height:1px;background:#d6d6d6"></div>
<div style="left:0;top:191px;width:36px;height:1px;background:#b4b4b4"></div>
<div style="left:37px;top:223px;width:1857px;height:1px;background:#d6d6d6"></div>
<div style="left:0;top:223px;width:36px;height:1px;background:#b4b4b4"></div>
<div style="left:37px;top:255px;width:1857px;height:1px;background:#d6d6d6"></div>
<div style="left:0;top:255px;width:36px;height:1px;background:#b4b4b4"></div>
<div style="left:37px;top:285px;width:1857px;height:1px;background:#d6d6d6"></div>
<div style="left:0;top:285px;width:36px;height:1px;background:#b4b4b4"></div>
<div style="left:37px;top:315px;width:1857px;height:1px;background:#d6d6d6"></div>
<div style="left:0;top:315px;width:36px;height:1px;background:#b4b4b4"></div>
<div style="left:37px;top:345px;width:1857px;height:1px;background:#d6d6d6"></div>
<div style="left:0;top:345px;width:36px;height:1px;background:#b4b4b4"></div>
<div style="left:37px;top:375px;width:1857px;height:1px;background:#d6d6d6"></div>
<div style="left:0;top:375px;width:36px;height:1px;background:#b4b4b4"></div>
<div style="left:37px;top:405px;width:1857px;height:1px;background:#d6d6d6"></div>
<div style="left:0;top:405px;width:36px;height:1px;background:#b4b4b4"></div>
<div style="left:37px;top:435px;width:1857px;height:1px;background:#d6d6d6"></div>
<div style="left:0;top:435px;width:36px;height:1px;background:#b4b4b4"></div>
<div style="left:37px;top:465px;width:1857px;height:1px;background:#d6d6d6"></div>
<div style="left:0;top:465px;width:36px;height:1px;background:#b4b4b4"></div>
<div style="left:37px;top:495px;width:1857px;height:1px;background:#d6d6d6"></div>
<div style="left:0;top:495px;width:36px;height:1px;background:#b4b4b4"></div>
<div style="left:37px;top:525px;width:1857px;height:1px;background:#d6d6d6"></div>
<div style="left:0;top:525px;width:36px;height:1px;background:#b4b4b4"></div>
<div style="left:37px;top:555px;width:1857px;height:1px;background:#d6d6d6"></div>
<div style="left:0;top:555px;width:36px;height:1px;background:#b4b4b4"></div>
<div style="left:37px;top:585px;width:1857px;height:1px;background:#d6d6d6"></div>
<div style="left:0;top:585px;width:36px;height:1px;background:#b4b4b4"></div>
<div style="left:37px;top:615px;width:1857px;height:1px;background:#d6d6d6"></div>
<div style="left:0;top:615px;width:36px;height:1px;background:#b4b4b4"></div>
<div style="left:37px;top:645px;width:1857px;height:1px;background:#d6d6d6"></div>
<div style="left:0;top:645px;width:36px;height:1px;background:#b4b4b4"></div>
<div style="left:37px;top:675px;width:1857px;height:1px;background:#d6d6d6"></div>
<div style="left:0;top:675px;width:36px;height:1px;background:#b4b4b4"></div>
<div style="left:37px;top:705px;width:1857px;height:1px;background:#d6d6d6"></div>
<div style="left:0;top:705px;width:36px;height:1px;background:#b4b4b4"></div>
<div style="left:156px;top:0;width:1px;height:687px;background:#d6d6d6"></div>
<div style="left:244px;top:0;width:1px;height:687px;background:#d6d6d6"></div>
<div style="left:332px;top:0;width:1px;height:687px;background:#d6d6d6"></div>
<div style="left:420px;top:0;width:1px;height:687px;background:#d6d6d6"></div>
<div style="left:508px;top:0;width:1px;height:687px;background:#d6d6d6"></div>
<div style="left:596px;top:0;width:1px;height:687px;background:#d6d6d6"></div>
<div style="left:684px;top:0;width:1px;height:687px;background:#d6d6d6"></div>
<div style="left:804px;top:0;width:1px;height:687px;background:#d6d6d6"></div>
<div style="left:891px;top:0;width:1px;height:687px;background:#d6d6d6"></div>
<div style="left:952px;top:0;width:1px;height:687px;background:#d6d6d6"></div>
<div style="left:1040px;top:0;width:1px;height:687px;background:#d6d6d6"></div>
<div style="left:1128px;top:0;width:1px;height:687px;background:#d6d6d6"></div>
<div style="left:1216px;top:0;width:1px;height:687px;background:#d6d6d6"></div>
<div style="left:1304px;top:0;width:1px;height:687px;background:#d6d6d6"></div>
<div style="left:1392px;top:0;width:1px;height:687px;background:#d6d6d6"></div>
<div style="left:1480px;top:0;width:1px;height:687px;background:#d6d6d6"></div>
<div style="left:1568px;top:0;width:1px;height:687px;background:#d6d6d6"></div>
<div style="left:1656px;top:0;width:1px;height:687px;background:#d6d6d6"></div>
<div style="left:1744px;top:0;width:1px;height:687px;background:#d6d6d6"></div>
<div style="left:1832px;top:0;width:1px;height:687px;background:#d6d6d6"></div>
<div style="left:0;top:32px;width:35px;height:31px;background:#d2d2d2"></div>
<div style="left:35px;top:31px;width:2px;height:33px;background:#217346"></div>
<div class="cell l" style="left:37px;top:0px;width:119px;height:31px;line-height:33px;">データ日付</div>
<div class="cell l" style="left:157px;top:0px;width:87px;height:31px;line-height:33px;">始値</div>
<div class="cell l" style="left:245px;top:0px;width:87px;height:31px;line-height:33px;">高値</div>
<div class="cell l" style="left:333px;top:0px;width:87px;height:31px;line-height:33px;">安値</div>
<div class="cell l" style="left:421px;top:0px;width:87px;height:31px;line-height:33px;">終値</div>
<div class="cell l" style="left:509px;top:0px;width:87px;height:31px;line-height:33px;">前日比</div>
<div class="cell l" style="left:597px;top:0px;width:87px;height:31px;line-height:33px;">比率</div>
<div class="cell l" style="left:685px;top:0px;width:119px;height:31px;line-height:33px;">売買代金</div>
<div class="cell m" style="left:804px;top:-1px;width:88px;height:33px;background:#C6EFCE;line-height:35px;color:#1a711a;">陽線陰線</div>
<div class="cell m" style="left:892px;top:0px;width:60px;height:31px;line-height:33px;">連続数</div>
<div class="cell l" style="left:953px;top:0px;width:87px;height:31px;line-height:33px;">終値前日比</div>
<div class="cell l" style="left:1041px;top:0px;width:87px;height:31px;line-height:33px;">上幅下幅</div>
<div class="cell l" style="left:1129px;top:0px;width:87px;height:31px;line-height:33px;">5日比較</div>
<div class="cell l" style="left:1216px;top:-1px;width:89px;height:33px;background:#C6EFCE;line-height:35px;color:#1a711a;padding-left:5px;"></div>
<div class="cell l" style="left:1305px;top:0px;width:87px;height:31px;line-height:33px;">25日比較</div>
<div class="cell l" style="left:1392px;top:-1px;width:89px;height:33px;background:#C6EFCE;line-height:35px;color:#1a711a;padding-left:5px;"></div>
<div class="cell l" style="left:1481px;top:0px;width:87px;height:31px;line-height:33px;">60日線</div>
<div class="cell l" style="left:1568px;top:-1px;width:89px;height:33px;background:#C6EFCE;line-height:35px;color:#1a711a;padding-left:5px;"></div>
<div class="cell l" style="left:1657px;top:0px;width:87px;height:31px;line-height:33px;">トレンド</div>
<div class="cell r" style="left:37px;top:32px;width:119px;height:31px;line-height:33px;">2021<i>/</i>6<i>/</i>4</div>
<div class="cell r" style="left:157px;top:32px;width:87px;height:31px;line-height:33px;">3,908.44</div>
<div class="cell r" style="left:245px;top:32px;width:87px;height:31px;line-height:33px;">3,916.50</div>
<div class="cell r" style="left:333px;top:32px;width:87px;height:31px;line-height:33px;">3,903.19</div>
<div class="cell r" style="left:421px;top:32px;width:87px;height:31px;line-height:33px;">3,911.33</div>
<div class="cell r" style="left:508px;top:31px;width:89px;height:33px;background:#f9fbfc;line-height:35px;padding-right:4px;"><b>-</b>0.18</div>
<div class="cell r" style="left:596px;top:31px;width:89px;height:33px;background:#f9fbfd;line-height:35px;padding-right:4px;">0</div>
<div class="cell r" style="left:685px;top:32px;width:119px;height:31px;line-height:33px;">64,212,800</div>
<div class="cell m" style="left:804px;top:31px;width:88px;height:33px;background:#FFC7CE;line-height:35px;color:#ad1523;">陽</div>
<div class="cell m" style="left:892px;top:32px;width:60px;height:31px;line-height:33px;">2</div>
<div class="cell r" style="left:953px;top:32px;width:87px;height:31px;line-height:33px;">14</div>
<div class="cell r" style="left:1129px;top:32px;width:87px;height:31px;line-height:33px;">3901.628</div>
<div class="cell r" style="left:1216px;top:31px;width:89px;height:33px;background:#FFC7CE;line-height:35px;color:#ad1523;padding-right:4px;">1.002487</div>
<div class="cell r" style="left:1305px;top:32px;width:87px;height:31px;line-height:33px;"><svg style="left:0;top:0" width="8" height="8"><path d="M0 0 H8 L0 8 Z" fill="#177a36"/></svg>3870.757</div>
<div class="cell r" style="left:1392px;top:31px;width:89px;height:33px;background:#FFC7CE;line-height:35px;color:#ad1523;padding-right:4px;">1.010482</div>
<div class="cell r" style="left:1481px;top:32px;width:87px;height:31px;line-height:33px;"><svg style="left:0;top:0" width="8" height="8"><path d="M0 0 H8 L0 8 Z" fill="#177a36"/></svg>3896.854</div>
<div class="cell r" style="left:1568px;top:31px;width:89px;height:33px;background:#FFC7CE;line-height:35px;color:#ad1523;padding-right:4px;">1.003715</div>
<div class="cell r" style="left:37px;top:64px;width:119px;height:31px;line-height:33px;">2021<i>/</i>6<i>/</i>3</div>
<div class="cell r" style="left:157px;top:64px;width:87px;height:31px;line-height:33px;">3,891.31</div>
<div class="cell r" style="left:245px;top:64px;width:87px;height:31px;line-height:33px;">3,912.61</div>
<div class="cell r" style="left:333px;top:64px;width:87px;height:31px;line-height:33px;">3,889.85</div>
<div class="cell r" style="left:421px;top:64px;width:87px;height:31px;line-height:33px;">3,911.51</div>
<div class="cell r" style="left:508px;top:63px;width:89px;height:33px;background:#fcf2f5;line-height:35px;padding-right:4px;">13.74</div>
<div class="cell r" style="left:596px;top:63px;width:89px;height:33px;background:#fcf0f3;line-height:35px;padding-right:4px;">0.4</div>
<div class="cell r" style="left:685px;top:64px;width:119px;height:31px;line-height:33px;">96,859,100</div>
<div class="cell m" style="left:804px;top:63px;width:88px;height:33px;background:#FFC7CE;line-height:35px;color:#ad1523;">陽</div>
<div class="cell m" style="left:892px;top:64px;width:60px;height:31px;line-height:33px;">1</div>
<div class="cell r" style="left:953px;top:64px;width:87px;height:31px;line-height:33px;">14</div>
<div class="cell r" style="left:1129px;top:64px;width:87px;height:31px;line-height:33px;">3895.892</div>
<div class="cell r" style="left:1216px;top:63px;width:89px;height:33px;background:#FFC7CE;line-height:35px;color:#ad1523;padding-right:4px;">1.004009</div>
<div class="cell r" style="left:1305px;top:64px;width:87px;height:31px;line-height:33px;"><svg style="left:0;top:0" width="8" height="8"><path d="M0 0 H8 L0 8 Z" fill="#177a36"/></svg>3870.928</div>
<div class="cell r" style="left:1392px;top:63px;width:89px;height:33px;background:#FFC7CE;line-height:35px;color:#ad1523;padding-right:4px;">1.010484</div>
<div class="cell r" style="left:1481px;top:64px;width:87px;height:31px;line-height:33px;"><svg style="left:0;top:0" width="8" height="8"><path d="M0 0 H8 L0 8 Z" fill="#177a36"/></svg>3894.684</div>
<div class="cell r" style="left:1568px;top:63px;width:89px;height:33px;background:#FFC7CE;line-height:35px;color:#ad1523;padding-right:4px;">1.00432</div>
<div class="cell r" style="left:37px;top:96px;width:119px;height:31px;line-height:33px;">2021<i>/</i>6<i>/</i>2</div>
<div class="cell r" style="left:157px;top:96px;width:87px;height:31px;line-height:33px;">3,901.32</div>
<div class="cell r" style="left:245px;top:96px;width:87px;height:31px;line-height:33px;">3,903.81</div>
<div class="cell r" style="left:333px;top:96px;width:87px;height:31px;line-height:33px;">3,895.84</div>
<div class="cell r" style="left:421px;top:96px;width:87px;height:31px;line-height:33px;">3,897.77</div>
<div class="cell r" style="left:508px;top:95px;width:89px;height:33px;background:#f9fbfd;line-height:35px;padding-right:4px;">1.01</div>
<div class="cell r" style="left:596px;top:95px;width:89px;height:33px;background:#f9fbfd;line-height:35px;padding-right:4px;">0</div>
<div class="cell r" style="left:685px;top:96px;width:119px;height:31px;line-height:33px;">94,673,200</div>
<div class="cell m" style="left:804px;top:95px;width:88px;height:33px;background:#C6EFCE;line-height:35px;color:#1a711a;">陰</div>
<div class="cell m" style="left:892px;top:96px;width:60px;height:31px;line-height:33px;">2</div>
<div class="cell r" style="left:953px;top:96px;width:87px;height:31px;line-height:33px;">7</div>
<div class="cell r" style="left:1129px;top:96px;width:87px;height:31px;line-height:33px;">3888.11</div>
<div class="cell r" style="left:1216px;top:95px;width:89px;height:33px;background:#FFC7CE;line-height:35px;color:#ad1523;padding-right:4px;">1.002484</div>
<div class="cell r" style="left:1305px;top:96px;width:87px;height:31px;line-height:33px;"><svg style="left:0;top:0" width="8" height="8"><path d="M0 0 H8 L0 8 Z" fill="#177a36"/></svg>3870.535</div>
<div class="cell r" style="left:1392px;top:95px;width:89px;height:33px;background:#FFC7CE;line-height:35px;color:#ad1523;padding-right:4px;">1.007036</div>
<div class="cell r" style="left:1481px;top:96px;width:87px;height:31px;line-height:33px;"><svg style="left:0;top:0" width="8" height="8"><path d="M0 0 H8 L0 8 Z" fill="#177a36"/></svg>3892.455</div>
<div class="cell r" style="left:1568px;top:95px;width:89px;height:33px;background:#FFC7CE;line-height:35px;color:#ad1523;padding-right:4px;">1.001365</div>
<div class="cell r" style="left:37px;top:128px;width:119px;height:31px;line-height:33px;">2021<i>/</i>6<i>/</i>1</div>
<div class="cell r" style="left:157px;top:128px;width:87px;height:31px;line-height:33px;">3,899.21</div>
<div class="cell r" style="left:245px;top:128px;width:87px;height:31px;line-height:33px;">3,902.20</div>
<div class="cell r" style="left:333px;top:128px;width:87px;height:31px;line-height:33px;">3,891.38</div>
<div class="cell r" style="left:421px;top:128px;width:87px;height:31px;line-height:33px;">3,896.76</div>
<div class="cell r" style="left:508px;top:127px;width:89px;height:33px;background:#fcfbfe;line-height:35px;padding-right:4px;">5.99</div>
<div class="cell r" style="left:596px;top:127px;width:89px;height:33px;background:#fcf8fb;line-height:35px;padding-right:4px;">0.2</div>
<div class="cell r" style="left:685px;top:128px;width:119px;height:31px;line-height:33px;">119,580,100</div>
<div class="cell m" style="left:804px;top:127px;width:88px;height:33px;background:#C6EFCE;line-height:35px;color:#1a711a;">陰</div>
<div class="cell m" style="left:892px;top:128px;width:60px;height:31px;line-height:33px;">1</div>
<div class="cell r" style="left:953px;top:128px;width:87px;height:31px;line-height:33px;">6</div>
<div class="cell r" style="left:1129px;top:128px;width:87px;height:31px;line-height:33px;">3882.83</div>
<div class="cell r" style="left:1216px;top:127px;width:89px;height:33px;background:#FFC7CE;line-height:35px;color:#ad1523;padding-right:4px;">1.003588</div>
<div class="cell r" style="left:1305px;top:128px;width:87px;height:31px;line-height:33px;"><svg style="left:0;top:0" width="8" height="8"><path d="M0 0 H8 L0 8 Z" fill="#177a36"/></svg>3871.13</div>
<div class="cell r" style="left:1392px;top:127px;width:89px;height:33px;background:#FFC7CE;line-height:35px;color:#ad1523;padding-right:4px;">1.006621</div>
<div class="cell r" style="left:1481px;top:128px;width:87px;height:31px;line-height:33px;"><svg style="left:0;top:0" width="8" height="8"><path d="M0 0 H8 L0 8 Z" fill="#177a36"/></svg>3890.448</div>
<div class="cell r" style="left:1568px;top:127px;width:89px;height:33px;background:#FFC7CE;line-height:35px;color:#ad1523;padding-right:4px;">1.001622</div>
<div class="cell r" style="left:37px;top:160px;width:119px;height:31px;line-height:33px;">2021<i>/</i>5<i>/</i>31</div>
<div class="cell r" style="left:157px;top:160px;width:87px;height:31px;line-height:33px;">3,887.92</div>
<div class="cell r" style="left:245px;top:160px;width:87px;height:31px;line-height:33px;">3,894.58</div>
<div class="cell r" style="left:333px;top:160px;width:87px;height:31px;line-height:33px;">3,886.69</div>
<div class="cell r" style="left:421px;top:160px;width:87px;height:31px;line-height:33px;">3,890.77</div>
<div class="cell r" style="left:508px;top:159px;width:89px;height:33px;background:#fcf9fc;line-height:35px;padding-right:4px;">8.12</div>
<div class="cell r" style="left:596px;top:159px;width:89px;height:33px;background:#fcf8fb;line-height:35px;padding-right:4px;">0.2</div>
<div class="cell r" style="left:685px;top:160px;width:119px;height:31px;line-height:33px;">95,253,800</div>
<div class="cell m" style="left:804px;top:159px;width:88px;height:33px;background:#FFC7CE;line-height:35px;color:#ad1523;">陽</div>
<div class="cell m" style="left:892px;top:160px;width:60px;height:31px;line-height:33px;">2</div>
<div class="cell r" style="left:953px;top:160px;width:87px;height:31px;line-height:33px;">18</div>
<div class="cell r" style="left:1129px;top:160px;width:87px;height:31px;line-height:33px;">3878.314</div>
<div class="cell r" style="left:1216px;top:159px;width:89px;height:33px;background:#FFC7CE;line-height:35px;color:#ad1523;padding-right:4px;">1.003212</div>
<div class="cell r" style="left:1305px;top:160px;width:87px;height:31px;line-height:33px;"><svg style="left:0;top:0" width="8" height="8"><path d="M0 0 H8 L0 8 Z" fill="#177a36"/></svg>3870.567</div>
<div class="cell r" style="left:1392px;top:159px;width:89px;height:33px;background:#FFC7CE;line-height:35px;color:#ad1523;padding-right:4px;">1.00522</div>
<div class="cell r" style="left:1481px;top:160px;width:87px;height:31px;line-height:33px;"><svg style="left:0;top:0" width="8" height="8"><path d="M0 0 H8 L0 8 Z" fill="#177a36"/></svg>3889.068</div>
<div class="cell r" style="left:1568px;top:159px;width:89px;height:33px;background:#FFC7CE;line-height:35px;color:#ad1523;padding-right:4px;">1.000438</div>
<div class="cell r" style="left:37px;top:192px;width:119px;height:31px;line-height:33px;">2021<i>/</i>5<i>/</i>28</div>
<div class="cell r" style="left:157px;top:192px;width:87px;height:31px;line-height:33px;">3,877.85</div>
<div class="cell r" style="left:245px;top:192px;width:87px;height:31px;line-height:33px;">3,883.07</div>
<div class="cell r" style="left:333px;top:192px;width:87px;height:31px;line-height:33px;">3,873.79</div>
<div class="cell r" style="left:421px;top:192px;width:87px;height:31px;line-height:33px;">3,882.65</div>
<div class="cell r" style="left:508px;top:191px;width:89px;height:33px;background:#fcf6f9;line-height:35px;padding-right:4px;">10.05</div>
<div class="cell r" style="left:596px;top:191px;width:89px;height:33px;background:#fcf4f7;line-height:35px;padding-right:4px;">0.3</div>
<div class="cell r" style="left:685px;top:192px;width:119px;height:31px;line-height:33px;">130,776,800</div>
<div class="cell m" style="left:804px;top:191px;width:88px;height:33px;background:#FFC7CE;line-height:35px;color:#ad1523;">陽</div>
<div class="cell m" style="left:892px;top:192px;width:60px;height:31px;line-height:33px;">1</div>
<div class="cell r" style="left:953px;top:192px;width:87px;height:31px;line-height:33px;">10</div>
<div class="cell r" style="left:1129px;top:192px;width:87px;height:31px;line-height:33px;">3871.468</div>
<div class="cell r" style="left:1216px;top:191px;width:89px;height:33px;background:#FFC7CE;line-height:35px;color:#ad1523;padding-right:4px;">1.002888</div>
<div class="cell r" style="left:1305px;top:192px;width:87px;height:31px;line-height:33px;"><svg style="left:0;top:0" width="8" height="8"><path d="M0 0 H8 L0 8 Z" fill="#177a36"/></svg>3872.655</div>
<div class="cell r" style="left:1392px;top:191px;width:89px;height:33px;background:#FFC7CE;line-height:35px;color:#ad1523;padding-right:4px;">1.002581</div>
<div class="cell r" style="left:1481px;top:192px;width:87px;height:31px;line-height:33px;"><svg style="left:0;top:0" width="8" height="8"><path d="M0 0 H8 L0 8 Z" fill="#177a36"/></svg>3887.707</div>
<div class="cell r" style="left:1568px;top:191px;width:89px;height:33px;background:#C6EFCE;line-height:35px;color:#1a711a;padding-right:4px;">0.998699</div>
<div class="cell l" style="left:1656px;top:191px;width:89px;height:33px;background:#00B050;line-height:35px;padding-left:5px;">下降</div>
<div class="cell r" style="left:37px;top:224px;width:119px;height:31px;line-height:33px;">2021<i>/</i>5<i>/</i>27</div>
<div class="cell r" style="left:157px;top:224px;width:87px;height:31px;line-height:33px;">3,873.41</div>
<div class="cell r" style="left:245px;top:224px;width:87px;height:31px;line-height:33px;">3,876.87</div>
<div class="cell r" style="left:333px;top:224px;width:87px;height:31px;line-height:33px;">3,868.41</div>
<div class="cell r" style="left:421px;top:224px;width:87px;height:31px;line-height:33px;">3,872.60</div>
<div class="cell r" style="left:508px;top:223px;width:89px;height:33px;background:#fafbfd;line-height:35px;padding-right:4px;">1.23</div>
<div class="cell r" style="left:596px;top:223px;width:89px;height:33px;background:#f9fbfd;line-height:35px;padding-right:4px;">0</div>
<div class="cell r" style="left:685px;top:224px;width:119px;height:31px;line-height:33px;">142,329,500</div>
<div class="cell m" style="left:804px;top:223px;width:88px;height:33px;background:#C6EFCE;line-height:35px;color:#1a711a;">陰</div>
<div class="cell m" style="left:892px;top:224px;width:60px;height:31px;line-height:33px;">2</div>
<div class="cell r" style="left:953px;top:224px;width:87px;height:31px;line-height:33px;"><b>-</b>2</div>
<div class="cell r" style="left:1129px;top:224px;width:87px;height:31px;line-height:33px;">3865.93</div>
<div class="cell r" style="left:1216px;top:223px;width:89px;height:33px;background:#FFC7CE;line-height:35px;color:#ad1523;padding-right:4px;">1.001725</div>
<div class="cell r" style="left:1305px;top:224px;width:87px;height:31px;line-height:33px;"><svg style="left:0;top:0" width="8" height="8"><path d="M0 0 H8 L0 8 Z" fill="#177a36"/></svg>3875.634</div>
<div class="cell r" style="left:1392px;top:223px;width:89px;height:33px;background:#C6EFCE;line-height:35px;color:#1a711a;padding-right:4px;">0.999217</div>
<div class="cell r" style="left:1481px;top:224px;width:87px;height:31px;line-height:33px;"><svg style="left:0;top:0" width="8" height="8"><path d="M0 0 H8 L0 8 Z" fill="#177a36"/></svg>3886.595</div>
<div class="cell r" style="left:1568px;top:223px;width:89px;height:33px;background:#C6EFCE;line-height:35px;color:#1a711a;padding-right:4px;">0.996399</div>
<div class="cell l" style="left:1656px;top:223px;width:89px;height:33px;background:#00B050;line-height:35px;padding-left:5px;">下降</div>
<div class="cell r" style="left:37px;top:256px;width:119px;height:29px;line-height:31px;">2021<i>/</i>5<i>/</i>26</div>
<div class="cell r" style="left:157px;top:256px;width:87px;height:29px;line-height:31px;">3,872.26</div>
<div class="cell r" style="left:245px;top:256px;width:87px;height:29px;line-height:31px;">3,873.29</div>
<div class="cell r" style="left:333px;top:256px;width:87px;height:29px;line-height:31px;">3,868.42</div>
<div class="cell r" style="left:421px;top:256px;width:87px;height:29px;line-height:31px;">3,871.37</div>
<div class="cell r" style="left:508px;top:255px;width:89px;height:31px;background:#f7fafb;line-height:33px;padding-right:4px;"><b>-</b>2.81</div>
<div class="cell r" style="left:596px;top:255px;width:89px;height:31px;background:#f7fafb;line-height:33px;padding-right:4px;"><b>-</b>0.1</div>
<div class="cell r" style="left:685px;top:256px;width:119px;height:29px;line-height:31px;">95,786,700</div>
<div class="cell m" style="left:804px;top:255px;width:88px;height:31px;background:#C6EFCE;line-height:33px;color:#1a711a;">陰</div>
<div class="cell m" style="left:892px;top:256px;width:60px;height:29px;line-height:31px;">1</div>
<div class="cell r" style="left:953px;top:256px;width:87px;height:29px;line-height:31px;"><b>-</b>3</div>
<div class="cell r" style="left:1129px;top:256px;width:87px;height:29px;line-height:31px;">3859.434</div>
<div class="cell r" style="left:1216px;top:255px;width:89px;height:31px;background:#FFC7CE;line-height:33px;color:#ad1523;padding-right:4px;">1.003093</div>
<div class="cell r" style="left:1305px;top:256px;width:87px;height:29px;line-height:31px;"><svg style="left:0;top:0" width="8" height="8"><path d="M0 0 H8 L0 8 Z" fill="#177a36"/></svg>3878.911</div>
<div class="cell r" style="left:1392px;top:255px;width:89px;height:31px;background:#C6EFCE;line-height:33px;color:#1a711a;padding-right:4px;">0.998056</div>
<div class="cell r" style="left:1481px;top:256px;width:87px;height:29px;line-height:31px;"><svg style="left:0;top:0" width="8" height="8"><path d="M0 0 H8 L0 8 Z" fill="#177a36"/></svg>3885.351</div>
<div class="cell r" style="left:1568px;top:255px;width:89px;height:31px;background:#C6EFCE;line-height:33px;color:#1a711a;padding-right:4px;">0.996402</div>
<div class="cell l" style="left:1656px;top:255px;width:89px;height:31px;background:#00B050;line-height:33px;padding-left:5px;">下降</div>
<div class="cell r" style="left:37px;top:286px;width:119px;height:29px;line-height:31px;">2021<i>/</i>5<i>/</i>25</div>
<div class="cell r" style="left:157px;top:286px;width:87px;height:29px;line-height:31px;">3,867.50</div>
<div class="cell r" style="left:245px;top:286px;width:87px;height:29px;line-height:31px;">3,877.10</div>
<div class="cell r" style="left:333px;top:286px;width:87px;height:29px;line-height:31px;">3,867.16</div>
<div class="cell r" style="left:421px;top:286px;width:87px;height:29px;line-height:31px;">3,874.18</div>
<div class="cell r" style="left:508px;top:285px;width:89px;height:31px;background:#fceef1;line-height:33px;padding-right:4px;">17.64</div>
<div class="cell r" style="left:596px;top:285px;width:89px;height:31px;background:#fcecef;line-height:33px;padding-right:4px;">0.5</div>
<div class="cell r" style="left:685px;top:286px;width:119px;height:29px;line-height:31px;">142,849,400</div>
<div class="cell m" style="left:804px;top:285px;width:88px;height:31px;background:#FFC7CE;line-height:33px;color:#ad1523;">陽</div>
<div class="cell m" style="left:892px;top:286px;width:60px;height:29px;line-height:31px;">1</div>
<div class="cell r" style="left:953px;top:286px;width:87px;height:29px;line-height:31px;">18</div>
<div class="cell r" style="left:1129px;top:286px;width:87px;height:29px;line-height:31px;">3847.812</div>
<div class="cell r" style="left:1216px;top:285px;width:89px;height:31px;background:#FFC7CE;line-height:33px;color:#ad1523;padding-right:4px;">1.006853</div>
<div class="cell r" style="left:1305px;top:286px;width:87px;height:29px;line-height:31px;"><svg style="left:0;top:0" width="8" height="8"><path d="M0 0 H8 L0 8 Z" fill="#177a36"/></svg>3881.983</div>
<div class="cell r" style="left:1392px;top:285px;width:89px;height:31px;background:#C6EFCE;line-height:33px;color:#1a711a;padding-right:4px;">0.99799</div>
<div class="cell r" style="left:1481px;top:286px;width:87px;height:29px;line-height:31px;"><svg style="left:0;top:0" width="8" height="8"><path d="M0 0 H8 L0 8 Z" fill="#177a36"/></svg>3884.729</div>
<div class="cell r" style="left:1568px;top:285px;width:89px;height:31px;background:#C6EFCE;line-height:33px;color:#1a711a;padding-right:4px;">0.997284</div>
<div class="cell l" style="left:1656px;top:285px;width:89px;height:31px;background:#00B050;line-height:33px;padding-left:5px;">下降</div>
<div class="cell r" style="left:37px;top:316px;width:119px;height:29px;line-height:31px;">2021<i>/</i>5<i>/</i>24</div>
<div class="cell r" style="left:157px;top:316px;width:87px;height:29px;line-height:31px;">3,857.94</div>
<div class="cell r" style="left:245px;top:316px;width:87px;height:29px;line-height:31px;">3,865.29</div>
<div class="cell r" style="left:333px;top:316px;width:87px;height:29px;line-height:31px;">3,855.78</div>
<div class="cell r" style="left:421px;top:316px;width:87px;height:29px;line-height:31px;">3,856.54</div>
<div class="cell r" style="left:508px;top:315px;width:89px;height:31px;background:#fafbfd;line-height:33px;padding-right:4px;">1.58</div>
<div class="cell r" style="left:596px;top:315px;width:89px;height:31px;background:#f9fbfd;line-height:33px;padding-right:4px;">0</div>
<div class="cell r" style="left:685px;top:316px;width:119px;height:29px;line-height:31px;">81,165,600</div>
<div class="cell m" style="left:804px;top:315px;width:88px;height:31px;background:#C6EFCE;line-height:33px;color:#1a711a;">陰</div>
<div class="cell m" style="left:892px;top:316px;width:60px;height:29px;line-height:31px;">1</div>
<div class="cell r" style="left:953px;top:316px;width:87px;height:29px;line-height:31px;">2</div>
<div class="cell r" style="left:1129px;top:316px;width:87px;height:29px;line-height:31px;">3833.264</div>
<div class="cell r" style="left:1216px;top:315px;width:89px;height:31px;background:#FFC7CE;line-height:33px;color:#ad1523;padding-right:4px;">1.006072</div>
<div class="cell r" style="left:1305px;top:316px;width:87px;height:29px;line-height:31px;"><svg style="left:0;top:0" width="8" height="8"><path d="M0 0 H8 L0 8 Z" fill="#177a36"/></svg>3884.852</div>
<div class="cell r" style="left:1392px;top:315px;width:89px;height:31px;background:#C6EFCE;line-height:33px;color:#1a711a;padding-right:4px;">0.992712</div>
<div class="cell r" style="left:1481px;top:316px;width:87px;height:29px;line-height:31px;"><svg style="left:0;top:0" width="8" height="8"><path d="M0 0 H8 L0 8 Z" fill="#177a36"/></svg>3883.816</div>
<div class="cell r" style="left:1568px;top:315px;width:89px;height:31px;background:#C6EFCE;line-height:33px;color:#1a711a;padding-right:4px;">0.992977</div>
<div class="cell r" style="left:37px;top:346px;width:119px;height:29px;line-height:31px;">2021<i>/</i>5<i>/</i>21</div>
<div class="cell r" style="left:157px;top:346px;width:87px;height:29px;line-height:31px;">3,847.35</div>
<div class="cell r" style="left:245px;top:346px;width:87px;height:29px;line-height:31px;">3,856.65</div>
<div class="cell r" style="left:333px;top:346px;width:87px;height:29px;line-height:31px;">3,845.53</div>
<div class="cell r" style="left:421px;top:346px;width:87px;height:29px;line-height:31px;">3,854.96</div>
<div class="cell r" style="left:508px;top:345px;width:89px;height:31px;background:#fcf1f4;line-height:33px;padding-right:4px;">14.84</div>
<div class="cell r" style="left:596px;top:345px;width:89px;height:31px;background:#fcf0f3;line-height:33px;padding-right:4px;">0.4</div>
<div class="cell r" style="left:685px;top:346px;width:119px;height:29px;line-height:31px;">93,292,800</div>
<div class="cell m" style="left:804px;top:345px;width:88px;height:31px;background:#FFC7CE;line-height:33px;color:#ad1523;">陽</div>
<div class="cell m" style="left:891px;top:345px;width:62px;height:31px;background:#FFC000;line-height:33px;">4</div>
<div class="cell r" style="left:953px;top:346px;width:87px;height:29px;line-height:31px;">75</div>
<div class="cell l" style="left:1040px;top:345px;width:89px;height:31px;background:#FFC000;line-height:33px;padding-left:5px;">50越え</div>
<div class="cell r" style="left:1129px;top:346px;width:87px;height:29px;line-height:31px;">3817.86</div>
<div class="cell r" style="left:1216px;top:345px;width:89px;height:31px;background:#FFC7CE;line-height:33px;color:#ad1523;padding-right:4px;">1.009717</div>
<div class="cell r" style="left:1305px;top:346px;width:87px;height:29px;line-height:31px;"><svg style="left:0;top:0" width="8" height="8"><path d="M0 0 H8 L0 8 Z" fill="#177a36"/></svg>3888.416</div>
<div class="cell r" style="left:1392px;top:345px;width:89px;height:31px;background:#C6EFCE;line-height:33px;color:#1a711a;padding-right:4px;">0.991396</div>
<div class="cell r" style="left:1481px;top:346px;width:87px;height:29px;line-height:31px;"><svg style="left:0;top:0" width="8" height="8"><path d="M0 0 H8 L0 8 Z" fill="#177a36"/></svg>3883.699</div>
<div class="cell r" style="left:1568px;top:345px;width:89px;height:31px;background:#C6EFCE;line-height:33px;color:#1a711a;padding-right:4px;">0.9926</div>
<div class="cell r" style="left:37px;top:376px;width:119px;height:29px;line-height:31px;">2021<i>/</i>5<i>/</i>20</div>
<div class="cell r" style="left:157px;top:376px;width:87px;height:29px;line-height:31px;">3,817.28</div>
<div class="cell r" style="left:245px;top:376px;width:87px;height:29px;line-height:31px;">3,843.62</div>
<div class="cell r" style="left:333px;top:376px;width:87px;height:29px;line-height:31px;">3,817.28</div>
<div class="cell r" style="left:421px;top:376px;width:87px;height:29px;line-height:31px;">3,840.12</div>
<div class="cell r" style="left:508px;top:375px;width:89px;height:31px;background:#fbe4e7;line-height:33px;padding-right:4px;">26.86</div>
<div class="cell r" style="left:596px;top:375px;width:89px;height:31px;background:#fbe4e6;line-height:33px;padding-right:4px;">0.7</div>
<div class="cell r" style="left:685px;top:376px;width:119px;height:29px;line-height:31px;">65,274,800</div>
<div class="cell m" style="left:804px;top:375px;width:88px;height:31px;background:#FFC7CE;line-height:33px;color:#ad1523;">陽</div>
<div class="cell m" style="left:891px;top:375px;width:62px;height:31px;background:#FFC000;line-height:33px;">3</div>
<div class="cell r" style="left:953px;top:376px;width:87px;height:29px;line-height:31px;">61</div>
<div class="cell l" style="left:1040px;top:375px;width:89px;height:31px;background:#FFC000;line-height:33px;padding-left:5px;">50越え</div>
<div class="cell r" style="left:1129px;top:376px;width:87px;height:29px;line-height:31px;">3813.108</div>
<div class="cell r" style="left:1216px;top:375px;width:89px;height:31px;background:#FFC7CE;line-height:33px;color:#ad1523;padding-right:4px;">1.007084</div>
<div class="cell r" style="left:1305px;top:376px;width:87px;height:29px;line-height:31px;"><svg style="left:0;top:0" width="8" height="8"><path d="M0 0 H8 L0 8 Z" fill="#177a36"/></svg>3891.896</div>
<div class="cell r" style="left:1392px;top:375px;width:89px;height:31px;background:#C6EFCE;line-height:33px;color:#1a711a;padding-right:4px;">0.986697</div>
<div class="cell r" style="left:1481px;top:376px;width:87px;height:29px;line-height:31px;"><svg style="left:0;top:0" width="8" height="8"><path d="M0 0 H8 L0 8 Z" fill="#177a36"/></svg>3883.186</div>
<div class="cell r" style="left:1568px;top:375px;width:89px;height:31px;background:#C6EFCE;line-height:33px;color:#1a711a;padding-right:4px;">0.98891</div>
<div class="cell r" style="left:37px;top:406px;width:119px;height:29px;line-height:31px;">2021<i>/</i>5<i>/</i>19</div>
<div class="cell r" style="left:157px;top:406px;width:87px;height:29px;line-height:31px;">3,791.56</div>
<div class="cell r" style="left:245px;top:406px;width:87px;height:29px;line-height:31px;">3,814.54</div>
<div class="cell r" style="left:333px;top:406px;width:87px;height:29px;line-height:31px;">3,789.89</div>
<div class="cell r" style="left:421px;top:406px;width:87px;height:29px;line-height:31px;">3,813.26</div>
<div class="cell r" style="left:508px;top:405px;width:89px;height:31px;background:#fcf5f7;line-height:33px;padding-right:4px;">11.82</div>
<div class="cell r" style="left:596px;top:405px;width:89px;height:31px;background:#fcf4f7;line-height:33px;padding-right:4px;">0.3</div>
<div class="cell r" style="left:685px;top:406px;width:119px;height:29px;line-height:31px;">53,536,300</div>
<div class="cell m" style="left:804px;top:405px;width:88px;height:31px;background:#FFC7CE;line-height:33px;color:#ad1523;">陽</div>
<div class="cell m" style="left:891px;top:405px;width:62px;height:31px;background:#FFC000;line-height:33px;">2</div>
<div class="cell r" style="left:953px;top:406px;width:87px;height:29px;line-height:31px;">34</div>
<div class="cell r" style="left:1129px;top:406px;width:87px;height:29px;line-height:31px;">3806.082</div>
<div class="cell r" style="left:1216px;top:405px;width:89px;height:31px;background:#FFC7CE;line-height:33px;color:#ad1523;padding-right:4px;">1.001886</div>
<div class="cell r" style="left:1305px;top:406px;width:87px;height:29px;line-height:31px;"><svg style="left:0;top:0" width="8" height="8"><path d="M0 0 H8 L0 8 Z" fill="#177a36"/></svg>3896.389</div>
<div class="cell r" style="left:1392px;top:405px;width:89px;height:31px;background:#C6EFCE;line-height:33px;color:#1a711a;padding-right:4px;">0.978665</div>
<div class="cell r" style="left:1481px;top:406px;width:87px;height:29px;line-height:31px;"><svg style="left:0;top:0" width="8" height="8"><path d="M0 0 H8 L0 8 Z" fill="#177a36"/></svg>3883.213</div>
<div class="cell r" style="left:1568px;top:405px;width:89px;height:31px;background:#C6EFCE;line-height:33px;color:#1a711a;padding-right:4px;">0.981986</div>
<div class="cell r" style="left:37px;top:436px;width:119px;height:29px;line-height:31px;">2021<i>/</i>5<i>/</i>18</div>
<div class="cell r" style="left:157px;top:436px;width:87px;height:29px;line-height:31px;">3,781.61</div>
<div class="cell r" style="left:245px;top:436px;width:87px;height:29px;line-height:31px;">3,804.54</div>
<div class="cell r" style="left:333px;top:436px;width:87px;height:29px;line-height:31px;">3,779.04</div>
<div class="cell r" style="left:421px;top:436px;width:87px;height:29px;line-height:31px;">3,801.44</div>
<div class="cell r" style="left:508px;top:435px;width:89px;height:31px;background:#fbe9ec;line-height:33px;padding-right:4px;">21.92</div>
<div class="cell r" style="left:596px;top:435px;width:89px;height:31px;background:#fbe8ea;line-height:33px;padding-right:4px;">0.6</div>
<div class="cell r" style="left:685px;top:436px;width:119px;height:29px;line-height:31px;">85,913,000</div>
<div class="cell m" style="left:804px;top:435px;width:88px;height:31px;background:#FFC7CE;line-height:33px;color:#ad1523;">陽</div>
<div class="cell m" style="left:891px;top:435px;width:62px;height:31px;background:#FFC000;line-height:33px;">1</div>
<div class="cell r" style="left:953px;top:436px;width:87px;height:29px;line-height:31px;">22</div>
<div class="cell r" style="left:1129px;top:436px;width:87px;height:29px;line-height:31px;">3812.032</div>
<div class="cell r" style="left:1216px;top:435px;width:89px;height:31px;background:#C6EFCE;line-height:33px;color:#1a711a;padding-right:4px;">0.997221</div>
<div class="cell r" style="left:1305px;top:436px;width:87px;height:29px;line-height:31px;"><svg style="left:0;top:0" width="8" height="8"><path d="M0 0 H8 L0 8 Z" fill="#177a36"/></svg>3901.592</div>
<div class="cell r" style="left:1392px;top:435px;width:89px;height:31px;background:#C6EFCE;line-height:33px;color:#1a711a;padding-right:4px;">0.974331</div>
<div class="cell r" style="left:1481px;top:436px;width:87px;height:29px;line-height:31px;"><svg style="left:0;top:0" width="8" height="8"><path d="M0 0 H8 L0 8 Z" fill="#177a36"/></svg>3884.251</div>
<div class="cell r" style="left:1568px;top:435px;width:89px;height:31px;background:#C6EFCE;line-height:33px;color:#1a711a;padding-right:4px;">0.97868</div>
<div class="cell r" style="left:37px;top:466px;width:119px;height:29px;line-height:31px;">2021<i>/</i>5<i>/</i>17</div>
<div class="cell r" style="left:157px;top:466px;width:87px;height:29px;line-height:31px;">3,838.05</div>
<div class="cell r" style="left:245px;top:466px;width:87px;height:29px;line-height:31px;">3,838.92</div>
<div class="cell r" style="left:333px;top:466px;width:87px;height:29px;line-height:31px;">3,779.52</div>
<div class="cell r" style="left:421px;top:466px;width:87px;height:29px;line-height:31px;">3,779.52</div>
<div class="cell r" style="left:508px;top:465px;width:89px;height:31px;background:#d8ede0;line-height:33px;padding-right:4px;"><b>-</b>51.68</div>
<div class="cell r" style="left:596px;top:465px;width:89px;height:31px;background:#d8eee0;line-height:33px;padding-right:4px;"><b>-</b>1.3</div>
<div class="cell r" style="left:685px;top:466px;width:119px;height:29px;line-height:31px;">114,247,200</div>
<div class="cell m" style="left:804px;top:465px;width:88px;height:31px;background:#C6EFCE;line-height:33px;color:#1a711a;">陰</div>
<div class="cell m" style="left:892px;top:466px;width:60px;height:29px;line-height:31px;">1</div>
<div class="cell r" style="left:953px;top:466px;width:87px;height:29px;line-height:31px;"><b>-</b>52</div>
<div class="cell l" style="left:1040px;top:465px;width:89px;height:31px;background:#5B9BD5;line-height:33px;padding-left:5px;">50越え</div>
<div class="cell r" style="left:1129px;top:466px;width:87px;height:29px;line-height:31px;">3829.676</div>
<div class="cell r" style="left:1216px;top:465px;width:89px;height:31px;background:#C6EFCE;line-height:33px;color:#1a711a;padding-right:4px;">0.986903</div>
<div class="cell r" style="left:1305px;top:466px;width:87px;height:29px;line-height:31px;"><svg style="left:0;top:0" width="8" height="8"><path d="M0 0 H8 L0 8 Z" fill="#177a36"/></svg>3907.686</div>
<div class="cell r" style="left:1392px;top:465px;width:89px;height:31px;background:#C6EFCE;line-height:33px;color:#1a711a;padding-right:4px;">0.967202</div>
<div class="cell r" style="left:1481px;top:466px;width:87px;height:29px;line-height:31px;"><svg style="left:0;top:0" width="8" height="8"><path d="M0 0 H8 L0 8 Z" fill="#177a36"/></svg>3885.275</div>
<div class="cell r" style="left:1568px;top:465px;width:89px;height:31px;background:#C6EFCE;line-height:33px;color:#1a711a;padding-right:4px;">0.972781</div>
<div class="cell r" style="left:37px;top:496px;width:119px;height:29px;line-height:31px;">2021<i>/</i>5<i>/</i>14</div>
<div class="cell r" style="left:157px;top:496px;width:87px;height:29px;line-height:31px;">3,817.61</div>
<div class="cell r" style="left:245px;top:496px;width:87px;height:29px;line-height:31px;">3,833.00</div>
<div class="cell r" style="left:333px;top:496px;width:87px;height:29px;line-height:31px;">3,809.42</div>
<div class="cell r" style="left:421px;top:496px;width:87px;height:29px;line-height:31px;">3,831.20</div>
<div class="cell r" style="left:508px;top:495px;width:89px;height:31px;background:#fbe5e8;line-height:33px;padding-right:4px;">26.21</div>
<div class="cell r" style="left:596px;top:495px;width:89px;height:31px;background:#fbe4e6;line-height:33px;padding-right:4px;">0.7</div>
<div class="cell r" style="left:685px;top:496px;width:119px;height:29px;line-height:31px;">74,672,000</div>
<div class="cell m" style="left:804px;top:495px;width:88px;height:31px;background:#FFC7CE;line-height:33px;color:#ad1523;">陽</div>
<div class="cell m" style="left:892px;top:496px;width:60px;height:29px;line-height:31px;">1</div>
<div class="cell r" style="left:953px;top:496px;width:87px;height:29px;line-height:31px;">26</div>
<div class="cell r" style="left:1129px;top:496px;width:87px;height:29px;line-height:31px;">3857.272</div>
<div class="cell r" style="left:1216px;top:495px;width:89px;height:31px;background:#C6EFCE;line-height:33px;color:#1a711a;padding-right:4px;">0.993241</div>
<div class="cell r" style="left:1305px;top:496px;width:87px;height:29px;line-height:31px;"><svg style="left:0;top:0" width="8" height="8"><path d="M0 0 H8 L0 8 Z" fill="#177a36"/></svg>3914.037</div>
<div class="cell r" style="left:1392px;top:495px;width:89px;height:31px;background:#C6EFCE;line-height:33px;color:#1a711a;padding-right:4px;">0.978836</div>
<div class="cell r" style="left:1481px;top:496px;width:87px;height:29px;line-height:31px;"><svg style="left:0;top:0" width="8" height="8"><path d="M0 0 H8 L0 8 Z" fill="#177a36"/></svg>3886.775</div>
<div class="cell r" style="left:1568px;top:495px;width:89px;height:31px;background:#C6EFCE;line-height:33px;color:#1a711a;padding-right:4px;">0.985702</div>
<div class="cell r" style="left:37px;top:526px;width:119px;height:29px;line-height:31px;">2021<i>/</i>5<i>/</i>13</div>
<div class="cell r" style="left:157px;top:526px;width:87px;height:29px;line-height:31px;">3,816.48</div>
<div class="cell r" style="left:245px;top:526px;width:87px;height:29px;line-height:31px;">3,823.06</div>
<div class="cell r" style="left:333px;top:526px;width:87px;height:29px;line-height:31px;">3,791.92</div>
<div class="cell r" style="left:421px;top:526px;width:87px;height:29px;line-height:31px;">3,804.99</div>
<div class="cell r" style="left:508px;top:525px;width:89px;height:31px;background:#e1f1e7;line-height:33px;padding-right:4px;"><b>-</b>38.02</div>
<div class="cell r" style="left:596px;top:525px;width:89px;height:31px;background:#e0f1e7;line-height:33px;padding-right:4px;"><b>-</b>1</div>
<div class="cell r" style="left:685px;top:526px;width:119px;height:29px;line-height:31px;">88,581,000</div>
<div class="cell m" style="left:804px;top:525px;width:88px;height:31px;background:#C6EFCE;line-height:33px;color:#1a711a;">陰</div>
<div class="cell m" style="left:891px;top:525px;width:62px;height:31px;background:#5B9BD5;line-height:33px;">4</div>
<div class="cell r" style="left:953px;top:526px;width:87px;height:29px;line-height:31px;"><b>-</b>111</div>
<div class="cell l" style="left:1040px;top:525px;width:89px;height:31px;background:#5B9BD5;line-height:33px;padding-left:5px;">50越え</div>
<div class="cell r" style="left:1129px;top:526px;width:87px;height:29px;line-height:31px;">3874.146</div>
<div class="cell r" style="left:1216px;top:525px;width:89px;height:31px;background:#C6EFCE;line-height:33px;color:#1a711a;padding-right:4px;">0.982149</div>
<div class="cell r" style="left:1305px;top:526px;width:87px;height:29px;line-height:31px;"><svg style="left:0;top:0" width="8" height="8"><path d="M0 0 H8 L0 8 Z" fill="#177a36"/></svg>3919.05</div>
<div class="cell r" style="left:1392px;top:525px;width:89px;height:31px;background:#C6EFCE;line-height:33px;color:#1a711a;padding-right:4px;">0.970896</div>
<div class="cell r" style="left:1481px;top:526px;width:87px;height:29px;line-height:31px;"><svg style="left:0;top:0" width="8" height="8"><path d="M0 0 H8 L0 8 Z" fill="#177a36"/></svg>3887.712</div>
<div class="cell r" style="left:1568px;top:525px;width:89px;height:31px;background:#C6EFCE;line-height:33px;color:#1a711a;padding-right:4px;">0.978722</div>
<div class="cell r" style="left:37px;top:556px;width:119px;height:29px;line-height:31px;">2021<i>/</i>5<i>/</i>12</div>
<div class="cell r" style="left:157px;top:556px;width:87px;height:29px;line-height:31px;">3,888.06</div>
<div class="cell r" style="left:245px;top:556px;width:87px;height:29px;line-height:31px;">3,890.18</div>
<div class="cell r" style="left:333px;top:556px;width:87px;height:29px;line-height:31px;">3,828.85</div>
<div class="cell r" style="left:421px;top:556px;width:87px;height:29px;line-height:31px;">3,843.01</div>
<div class="cell r" style="left:508px;top:555px;width:89px;height:31px;background:#dbefe3;line-height:33px;padding-right:4px;"><b>-</b>46.65</div>
<div class="cell r" style="left:596px;top:555px;width:89px;height:31px;background:#dbefe2;line-height:33px;padding-right:4px;"><b>-</b>1.2</div>
<div class="cell r" style="left:685px;top:556px;width:119px;height:29px;line-height:31px;">84,921,300</div>
<div class="cell m" style="left:804px;top:555px;width:88px;height:31px;background:#C6EFCE;line-height:33px;color:#1a711a;">陰</div>
<div class="cell m" style="left:891px;top:555px;width:62px;height:31px;background:#5B9BD5;line-height:33px;">3</div>
<div class="cell r" style="left:953px;top:556px;width:87px;height:29px;line-height:31px;"><b>-</b>73</div>
<div class="cell l" style="left:1040px;top:555px;width:89px;height:31px;background:#5B9BD5;line-height:33px;padding-left:5px;">50越え</div>
<div class="cell r" style="left:1129px;top:556px;width:87px;height:29px;line-height:31px;">3892.87</div>
<div class="cell r" style="left:1216px;top:555px;width:89px;height:31px;background:#C6EFCE;line-height:33px;color:#1a711a;padding-right:4px;">0.987192</div>
<div class="cell r" style="left:1305px;top:556px;width:87px;height:29px;line-height:31px;"><svg style="left:0;top:0" width="8" height="8"><path d="M0 0 H8 L0 8 Z" fill="#177a36"/></svg>3924.653</div>
<div class="cell r" style="left:1392px;top:555px;width:89px;height:31px;background:#C6EFCE;line-height:33px;color:#1a711a;padding-right:4px;">0.979197</div>
<div class="cell r" style="left:1481px;top:556px;width:87px;height:29px;line-height:31px;"><svg style="left:0;top:0" width="8" height="8"><path d="M0 0 H8 L0 8 Z" fill="#177a36"/></svg>3888.791</div>
<div class="cell r" style="left:1568px;top:555px;width:89px;height:31px;background:#C6EFCE;line-height:33px;color:#1a711a;padding-right:4px;">0.988228</div>
<div class="cell r" style="left:37px;top:586px;width:119px;height:29px;line-height:31px;">2021<i>/</i>5<i>/</i>11</div>
<div class="cell r" style="left:157px;top:586px;width:87px;height:29px;line-height:31px;">3,910.00</div>
<div class="cell r" style="left:245px;top:586px;width:87px;height:29px;line-height:31px;">3,910.00</div>
<div class="cell r" style="left:333px;top:586px;width:87px;height:29px;line-height:31px;">3,889.03</div>
<div class="cell r" style="left:421px;top:586px;width:87px;height:29px;line-height:31px;">3,889.66</div>
<div class="cell r" style="left:508px;top:585px;width:89px;height:31px;background:#e7f4ed;line-height:33px;padding-right:4px;"><b>-</b>27.84</div>
<div class="cell r" style="left:596px;top:585px;width:89px;height:31px;background:#e8f4ed;line-height:33px;padding-right:4px;"><b>-</b>0.7</div>
<div class="cell r" style="left:685px;top:586px;width:119px;height:29px;line-height:31px;">68,008,300</div>
<div class="cell m" style="left:804px;top:585px;width:88px;height:31px;background:#C6EFCE;line-height:33px;color:#1a711a;">陰</div>
<div class="cell m" style="left:891px;top:585px;width:62px;height:31px;background:#5B9BD5;line-height:33px;">2</div>
<div class="cell r" style="left:953px;top:586px;width:87px;height:29px;line-height:31px;"><b>-</b>26</div>
<div class="cell r" style="left:1129px;top:586px;width:87px;height:29px;line-height:31px;">3903.308</div>
<div class="cell r" style="left:1216px;top:585px;width:89px;height:31px;background:#C6EFCE;line-height:33px;color:#1a711a;padding-right:4px;">0.996503</div>
<div class="cell r" style="left:1305px;top:586px;width:87px;height:29px;line-height:31px;"><svg style="left:0;top:0" width="8" height="8"><path d="M0 0 H8 L0 8 Z" fill="#177a36"/></svg>3928.438</div>
<div class="cell r" style="left:1392px;top:585px;width:89px;height:31px;background:#C6EFCE;line-height:33px;color:#1a711a;padding-right:4px;">0.990129</div>
<div class="cell r" style="left:1481px;top:586px;width:87px;height:29px;line-height:31px;"><svg style="left:0;top:0" width="8" height="8"><path d="M0 0 H8 L0 8 Z" fill="#177a36"/></svg>3889.052</div>
<div class="cell r" style="left:1568px;top:585px;width:89px;height:31px;background:#FFC7CE;line-height:33px;color:#ad1523;padding-right:4px;">1.000156</div>
<div class="cell r" style="left:37px;top:616px;width:119px;height:29px;line-height:31px;">2021<i>/</i>5<i>/</i>10</div>
<div class="cell r" style="left:157px;top:616px;width:87px;height:29px;line-height:31px;">3,920.35</div>
<div class="cell r" style="left:245px;top:616px;width:87px;height:29px;line-height:31px;">3,923.31</div>
<div class="cell r" style="left:333px;top:616px;width:87px;height:29px;line-height:31px;">3,915.24</div>
<div class="cell r" style="left:421px;top:616px;width:87px;height:29px;line-height:31px;">3,917.50</div>
<div class="cell r" style="left:508px;top:615px;width:89px;height:31px;background:#fafbfd;line-height:33px;padding-right:4px;">1.93</div>
<div class="cell r" style="left:596px;top:615px;width:89px;height:31px;background:#f9fbfd;line-height:33px;padding-right:4px;">0</div>
<div class="cell r" style="left:685px;top:616px;width:119px;height:29px;line-height:31px;">110,218,000</div>
<div class="cell m" style="left:804px;top:615px;width:88px;height:31px;background:#C6EFCE;line-height:33px;color:#1a711a;">陰</div>
<div class="cell m" style="left:891px;top:615px;width:62px;height:31px;background:#5B9BD5;line-height:33px;">1</div>
<div class="cell r" style="left:953px;top:616px;width:87px;height:29px;line-height:31px;">2</div>
<div class="cell r" style="left:1129px;top:616px;width:87px;height:29px;line-height:31px;">3906.588</div>
<div class="cell r" style="left:1216px;top:615px;width:89px;height:31px;background:#FFC7CE;line-height:33px;color:#ad1523;padding-right:4px;">1.002793</div>
<div class="cell r" style="left:1305px;top:616px;width:87px;height:29px;line-height:31px;"><svg style="left:0;top:0" width="8" height="8"><path d="M0 0 H8 L0 8 Z" fill="#177a36"/></svg>3930.397</div>
<div class="cell r" style="left:1392px;top:615px;width:89px;height:31px;background:#C6EFCE;line-height:33px;color:#1a711a;padding-right:4px;">0.996719</div>
<div class="cell r" style="left:1481px;top:616px;width:87px;height:29px;line-height:31px;"><svg style="left:0;top:0" width="8" height="8"><path d="M0 0 H8 L0 8 Z" fill="#177a36"/></svg>3888.45</div>
<div class="cell r" style="left:1568px;top:615px;width:89px;height:31px;background:#FFC7CE;line-height:33px;color:#ad1523;padding-right:4px;">1.007471</div>
<div class="cell r" style="left:37px;top:646px;width:119px;height:29px;line-height:31px;">2021<i>/</i>5<i>/</i>7</div>
<div class="cell r" style="left:157px;top:646px;width:87px;height:29px;line-height:31px;">3,901.93</div>
<div class="cell r" style="left:245px;top:646px;width:87px;height:29px;line-height:31px;">3,915.57</div>
<div class="cell r" style="left:333px;top:646px;width:87px;height:29px;line-height:31px;">3,900.46</div>
<div class="cell r" style="left:421px;top:646px;width:87px;height:29px;line-height:31px;">3,915.57</div>
<div class="cell r" style="left:508px;top:645px;width:89px;height:31px;background:#fceff2;line-height:33px;padding-right:4px;">16.96</div>
<div class="cell r" style="left:596px;top:645px;width:89px;height:31px;background:#fcf0f3;line-height:33px;padding-right:4px;">0.4</div>
<div class="cell r" style="left:685px;top:646px;width:119px;height:29px;line-height:31px;">81,123,300</div>
<div class="cell m" style="left:804px;top:645px;width:88px;height:31px;background:#FFC7CE;line-height:33px;color:#ad1523;">陽</div>
<div class="cell m" style="left:892px;top:646px;width:60px;height:29px;line-height:31px;">1</div>
<div class="cell r" style="left:953px;top:646px;width:87px;height:29px;line-height:31px;">17</div>
<div class="cell r" style="left:1129px;top:646px;width:87px;height:29px;line-height:31px;">3905.556</div>
<div class="cell r" style="left:1216px;top:645px;width:89px;height:31px;background:#FFC7CE;line-height:33px;color:#ad1523;padding-right:4px;">1.002564</div>
<div class="cell r" style="left:1305px;top:646px;width:87px;height:29px;line-height:31px;"><svg style="left:0;top:0" width="8" height="8"><path d="M0 0 H8 L0 8 Z" fill="#177a36"/></svg>3930.343</div>
<div class="cell r" style="left:1392px;top:645px;width:89px;height:31px;background:#C6EFCE;line-height:33px;color:#1a711a;padding-right:4px;">0.996241</div>
<div class="cell r" style="left:1481px;top:646px;width:87px;height:29px;line-height:31px;"><svg style="left:0;top:0" width="8" height="8"><path d="M0 0 H8 L0 8 Z" fill="#177a36"/></svg>3887.15</div>
<div class="cell r" style="left:1568px;top:645px;width:89px;height:31px;background:#FFC7CE;line-height:33px;color:#ad1523;padding-right:4px;">1.007311</div>
<div class="cell r" style="left:37px;top:676px;width:119px;height:29px;line-height:31px;">2021<i>/</i>5<i>/</i>6</div>
<div class="cell r" style="left:157px;top:676px;width:87px;height:29px;line-height:31px;">3,898.91</div>
<div class="cell r" style="left:245px;top:676px;width:87px;height:29px;line-height:31px;">3,906.96</div>
<div class="cell r" style="left:333px;top:676px;width:87px;height:29px;line-height:31px;">3,896.06</div>
<div class="cell r" style="left:421px;top:676px;width:87px;height:29px;line-height:31px;">3,898.61</div>
<div class="cell r" style="left:508px;top:675px;width:89px;height:31px;background:#f9fbfc;line-height:33px;padding-right:4px;"><b>-</b>0.41</div>
<div class="cell r" style="left:596px;top:675px;width:89px;height:31px;background:#f7fafb;line-height:33px;padding-right:4px;"><b>-</b>0.1</div>
<div class="cell r" style="left:685px;top:676px;width:119px;height:29px;line-height:31px;">114,830,600</div>
<div class="cell m" style="left:804px;top:675px;width:88px;height:31px;background:#C6EFCE;line-height:33px;color:#1a711a;">陰</div>
<div class="cell m" style="left:892px;top:676px;width:60px;height:29px;line-height:31px;">2</div>
<div class="cell r" style="left:953px;top:676px;width:87px;height:29px;line-height:31px;"><b>-</b>7</div>
<div class="cell r" style="left:1129px;top:676px;width:87px;height:29px;line-height:31px;">3905.564</div>
<div class="cell r" style="left:1216px;top:675px;width:89px;height:31px;background:#C6EFCE;line-height:33px;color:#1a711a;padding-right:4px;">0.998219</div>
<div class="cell r" style="left:1305px;top:676px;width:87px;height:29px;line-height:31px;"><svg style="left:0;top:0" width="8" height="8"><path d="M0 0 H8 L0 8 Z" fill="#177a36"/></svg>3930.699</div>
<div class="cell r" style="left:1392px;top:675px;width:89px;height:31px;background:#C6EFCE;line-height:33px;color:#1a711a;padding-right:4px;">0.991833</div>
<div class="cell r" style="left:1481px;top:676px;width:87px;height:29px;line-height:31px;"><svg style="left:0;top:0" width="8" height="8"><path d="M0 0 H8 L0 8 Z" fill="#177a36"/></svg>3885.641</div>
<div class="cell r" style="left:1568px;top:675px;width:89px;height:31px;background:#FFC7CE;line-height:33px;color:#ad1523;padding-right:4px;">1.003338</div>
<div style="left:0;top:0px;width:36px;height:31px;line-height:34px;color:#333;text-align:center;font-size:18px;white-space:nowrap">1</div>
<div style="left:0;top:32px;width:36px;height:31px;line-height:34px;color:#217346;text-align:center;font-size:18px;white-space:nowrap">2</div>
<div style="left:0;top:64px;width:36px;height:31px;line-height:34px;color:#333;text-align:center;font-size:18px;white-space:nowrap">3</div>
<div style="left:0;top:96px;width:36px;height:31px;line-height:34px;color:#333;text-align:center;font-size:18px;white-space:nowrap">4</div>
<div style="left:0;top:128px;width:36px;height:31px;line-height:34px;color:#333;text-align:center;font-size:18px;white-space:nowrap">5</div>
<div style="left:0;top:160px;width:36px;height:31px;line-height:34px;color:#333;text-align:center;font-size:18px;white-space:nowrap">6</div>
<div style="left:0;top:192px;width:36px;height:31px;line-height:34px;color:#333;text-align:center;font-size:18px;white-space:nowrap">7</div>
<div style="left:0;top:224px;width:36px;height:31px;line-height:34px;color:#333;text-align:center;font-size:18px;white-space:nowrap">8</div>
<div style="left:0;top:256px;width:36px;height:29px;line-height:32px;color:#333;text-align:center;font-size:18px;white-space:nowrap">9</div>
<div style="left:0;top:286px;width:36px;height:29px;line-height:32px;color:#333;text-align:center;font-size:18px;white-space:nowrap">10</div>
<div style="left:0;top:316px;width:36px;height:29px;line-height:32px;color:#333;text-align:center;font-size:18px;white-space:nowrap">11</div>
<div style="left:0;top:346px;width:36px;height:29px;line-height:32px;color:#333;text-align:center;font-size:18px;white-space:nowrap">12</div>
<div style="left:0;top:376px;width:36px;height:29px;line-height:32px;color:#333;text-align:center;font-size:18px;white-space:nowrap">13</div>
<div style="left:0;top:406px;width:36px;height:29px;line-height:32px;color:#333;text-align:center;font-size:18px;white-space:nowrap">14</div>
<div style="left:0;top:436px;width:36px;height:29px;line-height:32px;color:#333;text-align:center;font-size:18px;white-space:nowrap">15</div>
<div style="left:0;top:466px;width:36px;height:29px;line-height:32px;color:#333;text-align:center;font-size:18px;white-space:nowrap">16</div>
<div style="left:0;top:496px;width:36px;height:29px;line-height:32px;color:#333;text-align:center;font-size:18px;white-space:nowrap">17</div>
<div style="left:0;top:526px;width:36px;height:29px;line-height:32px;color:#333;text-align:center;font-size:18px;white-space:nowrap">18</div>
<div style="left:0;top:556px;width:36px;height:29px;line-height:32px;color:#333;text-align:center;font-size:18px;white-space:nowrap">19</div>
<div style="left:0;top:586px;width:36px;height:29px;line-height:32px;color:#333;text-align:center;font-size:18px;white-space:nowrap">20</div>
<div style="left:0;top:616px;width:36px;height:29px;line-height:32px;color:#333;text-align:center;font-size:18px;white-space:nowrap">21</div>
<div style="left:0;top:646px;width:36px;height:29px;line-height:32px;color:#333;text-align:center;font-size:18px;white-space:nowrap">22</div>
<div style="left:0;top:676px;width:36px;height:29px;line-height:32px;color:#333;text-align:center;font-size:18px;white-space:nowrap">23</div>
<svg style="left:683px;top:30px" width="123" height="35"><rect x="2" y="2" width="119" height="31" fill="none" stroke="#217346" stroke-width="4"/><rect x="2" y="2" width="119" height="31" fill="none" stroke="#fff" stroke-width="1.6" stroke-dasharray="2.4 3.6"/></svg>
<div style="left:802px;top:61px;width:5px;height:5px;background:#217346;border-left:1px solid #fff;border-top:1px solid #fff"></div>
</div>
<div style="left:1895px;top:258px;width:25px;height:718px;background:#e6e6e6;"></div>
<div style="left:1894px;top:288px;width:1px;height:688px;background:#a6a6a6;"></div>
<div style="left:1898px;top:260px;width:19px;height:18px;background:#fff;border:1px solid #c6c6c6;box-sizing:border-box;"></div>
<svg style="left:1903px;top:266px;" width="10" height="6" viewBox="0 0 10 6"><path d="M0 6 L5 0 L10 6 Z" fill="#777"/></svg>
<div style="left:1898px;top:299px;width:19px;height:658px;background:#d9d9d9;"></div>
<div style="left:1898px;top:279px;width:19px;height:21px;background:#fff;border:1px solid #c6c6c6;box-sizing:border-box;"></div>
<div style="left:1898px;top:957px;width:19px;height:19px;background:#fff;border:1px solid #c6c6c6;box-sizing:border-box;"></div>
<svg style="left:1903px;top:965px;" width="10" height="6" viewBox="0 0 10 6"><path d="M0 0 L5 6 L10 0 Z" fill="#666"/></svg>
<div style="left:0px;top:975px;width:1895px;height:1px;background:#9b9b9b;"></div>
<div style="left:0px;top:976px;width:1920px;height:27px;background:#e6e6e6;"></div>
<svg style="left:27px;top:983px;" width="9" height="12" viewBox="0 0 9 12"><path d="M8 1 V11 L1.5 6 Z" fill="#217346"/></svg>
<svg style="left:54px;top:983px;" width="9" height="12" viewBox="0 0 9 12"><path d="M1 1 V11 L7.5 6 Z" fill="#217346"/></svg>
<span class="t" style="font-size:17px;color:#217346;left:79px;top:977.5px;">...</span>
<div style="left:100px;top:979px;width:1px;height:19px;background:#ababab;"></div>
<div style="left:103px;top:977px;width:70px;height:23px;background:#ED7D31;"></div>
<span class="t" style="font-size:18px;color:#111;left:112px;top:971.4px;transform:scaleX(0.963);">業種別</span>
<div style="left:175px;top:979px;width:1px;height:19px;background:#ababab;"></div>
<div style="left:178px;top:977px;width:152px;height:23px;background:#ED7D31;"></div>
<span class="t" style="font-size:18px;color:#111;left:189px;top:971.4px;">20日騰落上位50</span>
<div style="left:332px;top:979px;width:1px;height:19px;background:#ababab;"></div>
<div style="left:334px;top:977px;width:176px;height:23px;background:#ED7D31;"></div>
<span class="t" style="font-size:18px;color:#111;left:347px;top:971.4px;transform:scaleX(0.849);">日別と株価による診断</span>
<div style="left:512px;top:979px;width:1px;height:19px;background:#ababab;"></div>
<div style="left:515px;top:977px;width:107px;height:23px;background:#ED7D31;"></div>
<span class="t" style="font-size:18px;color:#111;left:525px;top:971.4px;transform:scaleX(0.860);">累計  データ</span>
<div style="left:624px;top:979px;width:1px;height:19px;background:#ababab;"></div>
<span class="t" style="font-size:18px;color:#444;left:636px;top:971.4px;transform:scaleX(0.833);">トレンド統計関連</span>
<div style="left:769px;top:979px;width:1px;height:19px;background:#ababab;"></div>
<div style="left:771px;top:977px;width:89px;height:23px;background:#FF0000;"></div>
<span class="t" style="font-size:18px;color:#fff;left:781px;top:971.4px;transform:scaleX(1.015);">日経225</span>
<div style="left:862px;top:979px;width:1px;height:19px;background:#ababab;"></div>
<div style="left:865px;top:977px;width:112px;height:23px;background:#FF0000;"></div>
<span class="t" style="font-size:18px;color:#fff;left:875px;top:971.4px;transform:scaleX(0.850);">マザーズ指標</span>
<div style="left:979px;top:976px;width:61px;height:24px;background:linear-gradient(#ffffff 25%,#f7a6a6 100%);border-left:1px solid #ababab;border-right:1px solid #ababab;border-bottom:2px solid #217346;box-sizing:border-box"></div>
<span class="t" style="font-size:18px;color:#217346;left:992px;top:976.0px;transform:scaleX(0.971);">JAQ</span>
<div style="left:1042px;top:977px;width:77px;height:23px;background:#FF0000;"></div>
<span class="t" style="font-size:18px;color:#fff;left:1055px;top:976.0px;transform:scaleX(0.944);">TOPIX</span>
<div style="left:1121px;top:979px;width:1px;height:19px;background:#ababab;"></div>
<div style="left:1124px;top:977px;width:14px;height:23px;background:#FFC000;"></div>
<span class="t" style="font-size:18px;color:#111;left:1134px;top:976.0px;transform:scaleX(0.600);">1</span>
<div style="left:1138px;top:977px;width:6px;height:23px;background:#e6e6e6;"></div>
<span class="t" style="font-size:17px;color:#217346;left:1146px;top:977.5px;">...</span>
<svg style="left:1171px;top:978px;" width="21" height="21" viewBox="0 0 21 21"><circle cx="10.5" cy="10.5" r="9" fill="none" stroke="#777" stroke-width="1.3"/><path d="M10.5 5.5 V15.5 M5.5 10.5 H15.5" stroke="#777" stroke-width="1.5"/></svg>
<div style="left:1207px;top:983px;width:2px;height:2px;background:#a6a6a6;"></div>
<div style="left:1207px;top:988px;width:2px;height:2px;background:#a6a6a6;"></div>
<div style="left:1207px;top:993px;width:2px;height:2px;background:#a6a6a6;"></div>
<div style="left:0px;top:975px;width:1895px;height:1px;background:#9b9b9b;"></div>
<div style="left:1225px;top:980px;width:19px;height:19px;background:#fff;border:1px solid #c6c6c6;box-sizing:border-box;"></div>
<svg style="left:1231px;top:984px;" width="7" height="11" viewBox="0 0 7 11"><path d="M6.5 0.5 V10.5 L0.5 5.5 Z" fill="#555"/></svg>
<div style="left:1844px;top:980px;width:32px;height:19px;background:#d9d9d9;"></div>
<div style="left:1244px;top:980px;width:600px;height:19px;background:#fff;border:1px solid #c6c6c6;box-sizing:border-box;"></div>
<div style="left:1876px;top:980px;width:19px;height:19px;background:#fff;border:1px solid #c6c6c6;box-sizing:border-box;"></div>
<svg style="left:1882px;top:984px;" width="7" height="11" viewBox="0 0 7 11"><path d="M0.5 0.5 V10.5 L6.5 5.5 Z" fill="#555"/></svg>
<div style="left:0px;top:1003px;width:1920px;height:27px;background:#f3f3f3;"></div>
<div style="left:0px;top:1003px;width:1920px;height:1px;background:#cdcdcd;"></div>
<span class="t" style="font-size:14.5px;color:#333;left:7px;top:1005.5px;transform:scaleX(0.886);">コピー先を選択し、Enter キーを押すか、貼り付けを選択します。</span>
<div style="left:1538px;top:1003px;width:50px;height:27px;background:#c8c8c8;"></div>
<svg style="left:1554px;top:1008px;" width="18" height="18" viewBox="0 0 18 18"><rect x="1.5" y="1.5" width="15" height="15" fill="none" stroke="#6a6a6a" stroke-width="1.2"/><path d="M1.5 6.5 H16.5 M1.5 11.5 H16.5 M6.5 1.5 V16.5 M11.5 1.5 V16.5" stroke="#6a6a6a" stroke-width="1.1"/></svg>
<svg style="left:1603px;top:1008px;" width="19" height="18" viewBox="0 0 19 18"><rect x="1.5" y="1.5" width="16" height="14" fill="none" stroke="#6a6a6a" stroke-width="1.2"/><rect x="6" y="4.5" width="7" height="8" fill="none" stroke="#6a6a6a" stroke-width="1"/><path d="M7.5 7 H11.5 M7.5 9 H11.5 M7.5 11 H11.5" stroke="#6a6a6a" stroke-width=".8"/></svg>
<svg style="left:1653px;top:1008px;" width="19" height="18" viewBox="0 0 19 18"><rect x="1.5" y="1.5" width="16" height="14.5" fill="none" stroke="#6a6a6a" stroke-width="1.2"/><path d="M6 1.5 V9.5 H11.5 V1.5 M1.5 9.5 H6" fill="none" stroke="#6a6a6a" stroke-width="1.1"/></svg>
<div style="left:1695px;top:1016.5px;width:10px;height:1.3px;background:#555;"></div>
<div style="left:1711px;top:1017px;width:125px;height:1px;background:#8a8a8a;"></div>
<div style="left:1771px;top:1010px;width:6px;height:14px;background:#666;"></div>
<svg style="left:1840px;top:1010.5px;" width="13" height="13" viewBox="0 0 13 13"><path d="M6.5 1 V12 M1 6.5 H12" stroke="#555" stroke-width="1.3"/></svg>
<span class="t" style="font-size:15px;color:#444;left:1868px;top:1009.0px;transform:scaleX(1.105);">100%</span>
<div style="left:0;top:1030px;width:1920px;height:50px;background:linear-gradient(90deg,#c4dbd7 0px,#c9ded8 60px,#e6e8c4 480px,#f1ecbe 520px,#f0ecbf 740px,#e4ecc8 810px,#d4ebda 890px,#cfeadf 1040px,#c8e8e6 1110px,#cbe9e2 1220px,#e3ecc4 1360px,#f3edb2 1470px,#eeedb8 1610px,#e3edc6 1710px,#cfe9de 1810px,#bfe3e6 1920px)"></div>
<svg style="left:20px;top:1043px;" width="21" height="21" viewBox="0 0 21 21"><path d="M0 3 L8.5 1.8 V9.8 H0 Z M9.6 1.6 L21 0 V9.8 H9.6 Z M0 10.9 H8.5 V18.9 L0 17.7 Z M9.6 10.9 H21 V20.7 L9.6 19.1 Z" fill="#000"/></svg>
<div style="left:60px;top:1031px;width:430px;height:48px;background:#fff;border:1px solid #d9d9d9;box-sizing:border-box;"></div>
<svg style="left:75px;top:1044px;" width="22" height="22" viewBox="0 0 22 22"><circle cx="13.5" cy="8" r="6.2" fill="none" stroke="#222" stroke-width="1.6"/><path d="M9.3 12.5 L1 21" stroke="#222" stroke-width="1.8"/></svg>
<span class="t" style="font-size:17.5px;color:#444;left:110px;top:1041.5px;transform:scaleX(0.898);">ここに入力して検索</span>
<svg style="left:508px;top:1043px;" width="24" height="24" viewBox="0 0 24 24"><circle cx="12" cy="12" r="8.6" fill="none" stroke="#111" stroke-width="3"/></svg>
<svg style="left:568px;top:1044px;" width="24" height="22" viewBox="0 0 24 22"><rect x="2.8" y="6" width="12" height="10" fill="none" stroke="#111" stroke-width="1.5"/><path d="M2.8 4 V2 H14.8 V4 M2.8 18 V20 H14.8 V18 M20.5 1 V20" fill="none" stroke="#111" stroke-width="1.3"/><rect x="19" y="6" width="3" height="3" fill="#111"/></svg>
<svg style="left:629px;top:1041px;" width="29" height="26" viewBox="0 0 29 26"><path d="M1 3 Q1 1 3 1 H10 L13 4 H26 Q28 4 28 6 V22 H1 Z" fill="#f5b93a"/><path d="M1 9 H28 V23 Q28 24 27 24 H2 Q1 24 1 23 Z" fill="#fcd462"/><path d="M8 16 H21 V24 H17 V20 H12 V24 H8 Z" fill="#3a9be0"/></svg>
<svg style="left:690px;top:1040px;" width="31" height="30" viewBox="0 0 31 30"><path d="M9 9 V5 Q9 1.5 12.5 1.5 H18.5 Q22 1.5 22 5 V9" fill="none" stroke="#222" stroke-width="2"/><path d="M1 9 H30 L29 29 H2 Z" fill="#262626"/><rect x="10.5" y="13" width="4.6" height="4.6" fill="#f25022"/><rect x="16" y="13" width="4.6" height="4.6" fill="#7fba00"/><rect x="10.5" y="18.5" width="4.6" height="4.6" fill="#00a4ef"/><rect x="16" y="18.5" width="4.6" height="4.6" fill="#ffb900"/></svg>
<svg style="left:752px;top:1040px;" width="32" height="30" viewBox="0 0 32 30"><path d="M1 12 L16 1 L31 12 V28 H1 Z" fill="#0f6cbd"/><path d="M4 9 H28 V22 H4 Z" fill="#fff"/><path d="M1 12 L16 22 L31 12 V28 H1 Z" fill="#28a8ea"/><path d="M1 28 L16 18 L31 28 Z" fill="#1490df"/></svg>
<svg style="left:815px;top:1040px;" width="31" height="30" viewBox="0 0 31 30"><rect x="0" y="0" width="31" height="30" fill="#f4511e"/><circle cx="15" cy="15" r="11.5" fill="#fff"/><circle cx="15" cy="12.5" r="5.5" fill="#fbd3c4"/><path d="M6.5 23 Q15 14 23.5 23 Q19 26.5 15 26.5 Q11 26.5 6.5 23 Z" fill="#fbd3c4"/><path d="M9.5 11 Q12 5.5 19 8.5 Q21 10 20.5 12" fill="none" stroke="#f4511e" stroke-width="1.6"/></svg>
<svg style="left:878px;top:1041px;" width="28" height="28" viewBox="0 0 28 28"><rect x="0" y="0" width="28" height="28" rx="3" fill="#2b3fd6"/><rect x="2" y="1" width="24" height="12" rx="3" fill="#5a72ee"/><text x="14" y="15" text-anchor="middle" font-size="17" font-weight="700" fill="#fff" font-family="Liberation Sans,sans-serif">@</text><text x="14" y="24.5" text-anchor="middle" font-size="7.5" fill="#fff" font-family="Liberation Sans,sans-serif">menu</text></svg>
<div style="left:867px;top:1077px;width:51px;height:3px;background:#0a74d0;"></div>
<svg style="left:939px;top:1040px;" width="31" height="31" viewBox="0 0 31 31"><defs><linearGradient id="eg" x1="0.1" y1="0.9" x2="0.9" y2="0.1"><stop offset="0" stop-color="#0c5fb3"/><stop offset=".5" stop-color="#2aa0d6"/><stop offset="1" stop-color="#62d558"/></linearGradient></defs><circle cx="15.5" cy="15.5" r="14.6" fill="url(#eg)"/><path d="M13 16 Q13.3 11.3 18.6 11.3 Q24.2 11.5 25.4 17 Q26 20.3 30.2 18.6 Q29.5 24 24.5 27.3 Q17 26 14 21 Q13 19 13 16 Z" fill="#d9eedd"/><path d="M8.3 17 Q7.6 24 14.6 27.6 Q19 29.6 24.6 27.2 Q17 26.4 14 21 Q12.6 18 13.2 14.3 Q9.6 14.3 8.3 17 Z" fill="#0b3f86"/></svg>
<div style="left:929px;top:1077px;width:51px;height:3px;background:#0a74d0;"></div>
<svg style="left:1001px;top:1040px;" width="31" height="31" viewBox="0 0 31 31"><rect x="0" y="0" width="31" height="31" rx="2" fill="#d6e6fb"/><rect x="6" y="6" width="19" height="13" fill="#fff" stroke="#2f6fd0" stroke-width="2"/><path d="M10.5 12.5 L14 16 L21 8.5" fill="none" stroke="#2f6fd0" stroke-width="2.2"/><path d="M3 22 H28 L26 25 H5 Z" fill="#2f6fd0"/></svg>
<div style="left:991px;top:1077px;width:51px;height:3px;background:#0a74d0;"></div>
<div style="left:1048px;top:1030px;width:61px;height:50px;background:rgba(255,255,255,0.45);"></div>
<svg style="left:1062px;top:1040px;" width="32" height="30" viewBox="0 0 32 30"><rect x="9" y="1" width="22" height="28" rx="2" fill="#21a366"/><rect x="9" y="1" width="11" height="9.5" fill="#33c481"/><rect x="20" y="10.5" width="11" height="9.5" fill="#107c41"/><rect x="9" y="10.5" width="11" height="9.5" fill="#107c41"/><rect x="9" y="20" width="11" height="9" fill="#185c37"/><rect x="20" y="20" width="11" height="9" fill="#185c37" opacity=".85"/><rect x="1" y="7" width="16" height="16" rx="1.5" fill="#107c41"/><path d="M5.5 10.5 L12.5 19.5 M12.5 10.5 L5.5 19.5" stroke="#fff" stroke-width="2.2"/></svg>
<div style="left:1048px;top:1077px;width:61px;height:3px;background:#0a74d0;"></div>
<svg style="left:1589px;top:1049px;" width="18" height="11" viewBox="0 0 18 11"><path d="M1.5 9.5 L9 2 L16.5 9.5" fill="none" stroke="#111" stroke-width="1.6"/></svg>
<svg style="left:1617px;top:1046px;" width="24" height="16" viewBox="0 0 24 16"><path d="M6.5 14.5 H19 a4 4 0 0 0 0.5-8 a6 6 0 0 0-11.3-1.6 A5 5 0 0 0 6.5 14.5 Z" fill="#bdbdbd" stroke="#333" stroke-width="1.3"/></svg>
<svg style="left:1648px;top:1046px;" width="24" height="17" viewBox="0 0 24 17"><rect x="5" y="4" width="17" height="10" fill="none" stroke="#111" stroke-width="1.4"/><rect x="7" y="6" width="13" height="6" fill="#111"/><path d="M1 6 V9 Q1 11 3.5 11 V14 M0 6 H4" fill="none" stroke="#111" stroke-width="1.3"/></svg>
<svg style="left:1680px;top:1045px;" width="22" height="18" viewBox="0 0 22 18"><path d="M2 17 A15 15 0 0 1 17 2" fill="none" stroke="#333" stroke-width="1.3"/><path d="M6 17 A11 11 0 0 1 17 6" fill="none" stroke="#333" stroke-width="1.3"/><path d="M10 17 A7 7 0 0 1 17 10" fill="none" stroke="#333" stroke-width="1.3"/><circle cx="15" cy="16" r="1.7" fill="#333"/></svg>
<svg style="left:1708px;top:1045px;" width="24" height="18" viewBox="0 0 24 18"><path d="M1.5 6.5 H5 L10 2 V16 L5 11.5 H1.5 Z" fill="none" stroke="#111" stroke-width="1.3"/><path d="M13 6 Q15 9 13 12 M16 4 Q19.5 9 16 14" fill="none" stroke="#111" stroke-width="1.2"/><path d="M19.5 2 Q24 9 19.5 16" fill="none" stroke="#999" stroke-width="1.1"/></svg>
<span class="t" style="font-size:24px;color:#111;left:1740px;top:1041.5px;">A</span>
<span class="t" style="font-size:15px;color:#222;left:1790px;top:1036.0px;transform:scaleX(0.947);">20:56</span>
<span class="t" style="font-size:15px;color:#222;left:1770px;top:1059.0px;">2021/06/04</span>
<svg style="left:1869px;top:1043px;" width="32" height="33" viewBox="0 0 32 33"><path d="M1 2 H20 V17 H10 L5.5 21.5 V17 H1 Z" fill="#111"/><path d="M4 6 H17 M4 9.5 H17 M4 13 H13" stroke="#d8ebe0" stroke-width="1.2"/><circle cx="19.5" cy="21.5" r="9.3" fill="#d6d6d6" stroke="#8a8a8a" stroke-width="1"/><text x="19.5" y="26.8" text-anchor="middle" font-size="15" fill="#111" font-family="Liberation Sans,sans-serif">2</text></svg>
</body></html>
